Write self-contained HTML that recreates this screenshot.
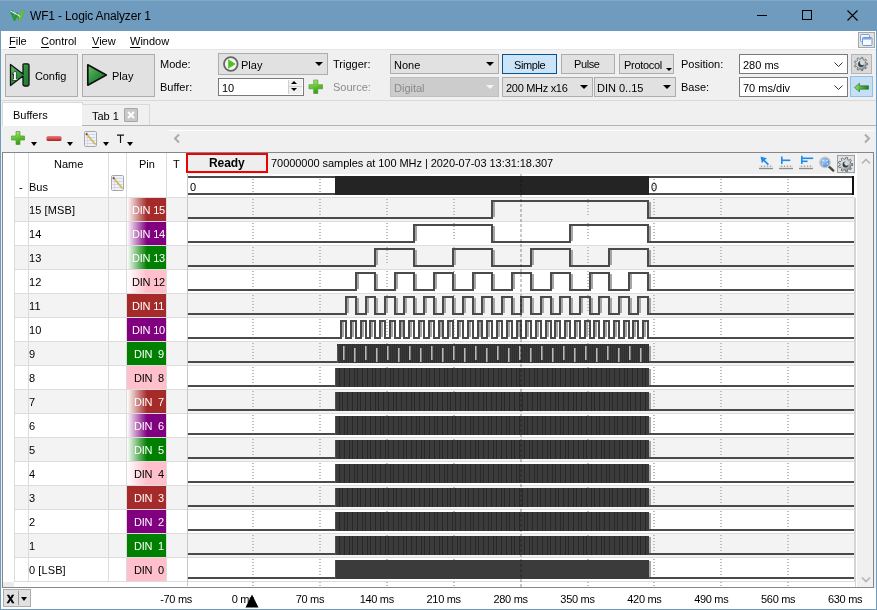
<!DOCTYPE html><html><head><meta charset="utf-8"><style>
*{box-sizing:border-box}
body{margin:0;width:877px;height:610px;overflow:hidden;background:#F0F0F0;position:relative;font-family:"Liberation Sans",sans-serif;font-size:11px;color:#000}
.t{position:absolute;white-space:nowrap;line-height:13px}
.btn{position:absolute;background:#E1E1E1;border:1px solid #ADADAD}
.cmb{position:absolute;background:#E1E1E1;border:1px solid #ADADAD}
.tri{position:absolute;width:0;height:0;border-left:4px solid transparent;border-right:4px solid transparent;border-top:4px solid #000}
</style></head><body>
<div style="position:absolute;left:0px;top:0px;width:877px;height:31px;background:#6F9BBE"></div>
<div style="position:absolute;left:0px;top:0px;width:877px;height:1px;background:#82A9C6"></div>
<svg style="position:absolute;left:9px;top:10px" width="17" height="12" viewBox="0 0 17 12">
<path d="M0.3 0.3 L3.6 0.3 L5.6 6 L7.4 2.4 L8.8 2.4 L10.6 6 L12.6 0.3 L15.8 0.3 L11.4 11 L9.9 11 L8.1 6.8 L6.3 11 L4.8 11 Z" fill="#28963C"/>
<path d="M8.8 2.4 L10.6 6 L12.6 0.3 L15.8 0.3 L11.4 11 L9.9 11 Z" fill="#6CBF3A"/>
<path d="M1.2 0.9 L9 5 L11.2 6.6" stroke="#F2FFE6" stroke-width="1" fill="none"/>
</svg>
<div class="t" style="left:30px;top:9px;font-size:12px;color:#000;line-height:14px;letter-spacing:-0.15px">WF1 - Logic Analyzer 1</div>
<div style="position:absolute;left:757px;top:15px;width:10px;height:1px;background:#000"></div>
<div style="position:absolute;left:802px;top:10px;width:10px;height:10px;border:1px solid #000"></div>
<svg style="position:absolute;left:847px;top:10px" width="11" height="11" viewBox="0 0 11 11"><path d="M0.5 0.5L10.5 10.5M10.5 0.5L0.5 10.5" stroke="#000" stroke-width="1.1"/></svg>
<div style="position:absolute;left:0px;top:31px;width:1px;height:579px;background:#6F9BBE"></div>
<div style="position:absolute;left:876px;top:31px;width:1px;height:579px;background:#6F9BBE"></div>
<div style="position:absolute;left:1px;top:588px;width:875px;height:21px;background:#FFFFFF"></div>
<div style="position:absolute;left:0px;top:609px;width:877px;height:1px;background:#6F9BBE"></div>
<div style="position:absolute;left:1px;top:31px;width:875px;height:18px;background:#fff"></div>
<div style="position:absolute;left:1px;top:49px;width:875px;height:1px;background:#E6E6E6"></div>
<div class="t" style="left:9px;top:35px;"><u style="text-decoration-thickness:1px;text-underline-offset:2px">F</u>ile</div>
<div class="t" style="left:41px;top:35px;"><u style="text-decoration-thickness:1px;text-underline-offset:2px">C</u>ontrol</div>
<div class="t" style="left:92px;top:35px;"><u style="text-decoration-thickness:1px;text-underline-offset:2px">V</u>iew</div>
<div class="t" style="left:130px;top:35px;"><u style="text-decoration-thickness:1px;text-underline-offset:2px">W</u>indow</div>
<div style="position:absolute;left:858px;top:32px;width:17px;height:16px;background:#E3E3E3;border:1px solid #A8A8A8"></div>
<svg style="position:absolute;left:860px;top:33px" width="14" height="14" viewBox="0 0 14 14">
<rect x="0.5" y="1.5" width="9" height="7" fill="#EEF3FA" stroke="#7FA6DC" rx="0.8"/>
<rect x="2.5" y="4.5" width="9.5" height="8" fill="#F6F9FD" stroke="#6F98D4" rx="0.8"/>
<rect x="3" y="5" width="8.5" height="1.6" fill="#86ABDF"/>
</svg>
<div style="position:absolute;left:1px;top:100px;width:875px;height:1px;background:#D9D9D9"></div>
<div class="btn" style="left:5px;top:54px;width:73px;height:43px"></div>
<svg style="position:absolute;left:9px;top:63px;overflow:visible" width="22" height="24" viewBox="0 0 22 24">
<defs><linearGradient id="gg" x1="0" y1="0" x2="1" y2="1"><stop offset="0" stop-color="#6DBF6D"/><stop offset="0.5" stop-color="#2E9140"/><stop offset="1" stop-color="#1F7A30"/></linearGradient></defs>
<path d="M1.5 1.5 L14 11 L14 2 Q14 0.8 15.5 0.8 L18.5 0.8 Q20 0.8 20 2 L20 21.5 Q20 23 18.5 23 L15.5 23 Q14 23 14 21.5 L14 13 L1.5 22.5 Z" fill="url(#gg)" stroke="#111" stroke-width="1.3" stroke-linejoin="round"/>
<text x="2.6" y="16.5" font-family="Liberation Serif" font-weight="bold" font-size="13" fill="#fff" stroke="#222" stroke-width="1.2" paint-order="stroke">1</text>
</svg>
<div class="t" style="left:35px;top:70px;letter-spacing:-0.1px">Config</div>
<div class="btn" style="left:82px;top:54px;width:73px;height:43px"></div>
<svg style="position:absolute;left:86px;top:63px" width="23" height="24" viewBox="0 0 23 24">
<path d="M1.8 1.8 L20.3 12 L1.8 22.2 Z" fill="url(#gg)" stroke="#111" stroke-width="1.7" stroke-linejoin="round"/>
</svg>
<div class="t" style="left:112px;top:70px;">Play</div>
<div class="t" style="left:160px;top:58px;">Mode:</div>
<div class="t" style="left:160px;top:81px;">Buffer:</div>
<div class="cmb" style="left:218px;top:53px;width:110px;height:22px"></div>
<svg style="position:absolute;left:222px;top:55px" width="18" height="18" viewBox="0 0 18 18">
<circle cx="8.8" cy="9" r="6.8" fill="#F4F4F4" stroke="#666" stroke-width="1.8"/>
<path d="M6.2 4.2 L13.6 9 L6.2 13.8Z" fill="#4CC21A"/></svg>
<div class="t" style="left:241px;top:59px;">Play</div>
<div class="tri" style="left:315px;top:62px"></div>
<div style="position:absolute;left:218px;top:78px;width:86px;height:18px;background:#fff;border:1px solid #7A7A7A"></div>
<div class="t" style="left:222px;top:82px;">10</div>
<div style="position:absolute;left:288px;top:80px;width:14px;height:14px;background:#F0F0F0;border-left:1px solid #CFCFCF"></div>
<div style="position:absolute;left:289px;top:86px;width:13px;height:1px;background:#CFCFCF"></div>
<div class="tri" style="left:291px;top:88px;border-width:3px 3.5px 0 3.5px"></div>
<div class="tri" style="left:291px;top:81px;border-width:0 3.5px 3px 3.5px;border-top:0;border-bottom:3px solid #000"></div>
<svg style="position:absolute;left:308px;top:79px" width="16" height="16" viewBox="0 0 16 16">
<defs><linearGradient id="gp" x1="0" y1="0" x2="0.3" y2="1"><stop offset="0" stop-color="#B4EC8A"/><stop offset="0.5" stop-color="#6CC83C"/><stop offset="1" stop-color="#3C9A1C"/></linearGradient></defs>
<path d="M5.7 1 H9.8 V5.7 H14.5 V9.8 H9.8 V14.5 H5.7 V9.8 H1 V5.7 H5.7Z" fill="url(#gp)" stroke="#4E9E2A" stroke-width="0.7" stroke-linejoin="round"/></svg>
<div class="t" style="left:333px;top:58px;">Trigger:</div>
<div class="t" style="left:333px;top:81px;color:#8A8A8A">Source:</div>
<div class="cmb" style="left:390px;top:54px;width:109px;height:20px"></div>
<div class="t" style="left:394px;top:59px;">None</div>
<div class="tri" style="left:486px;top:62px"></div>
<div class="cmb" style="left:390px;top:77px;width:109px;height:20px;background:#CCCCCC;border-color:#BFBFBF"></div>
<div class="t" style="left:394px;top:82px;color:#8A8A8A">Digital</div>
<div class="tri" style="left:486px;top:85px;border-top-color:#F4F4F4"></div>
<div class="btn" style="left:502px;top:54px;width:55px;height:20px;background:#CCE4F7;border-color:#005499"></div>
<div class="t" style="left:514px;top:59px;letter-spacing:-0.4px">Simple</div>
<div class="btn" style="left:561px;top:54px;width:54px;height:20px"></div>
<div class="t" style="left:574px;top:58px;letter-spacing:-0.4px">Pulse</div>
<div class="btn" style="left:619px;top:54px;width:55px;height:20px"></div>
<div class="t" style="left:624px;top:59px;letter-spacing:-0.3px">Protocol</div>
<div class="tri" style="left:666px;top:68px;border-width:3px 3px 0 3px"></div>
<div class="cmb" style="left:502px;top:77px;width:91px;height:20px"></div>
<div class="t" style="left:506px;top:82px;letter-spacing:-0.3px">200 MHz x16</div>
<div class="tri" style="left:580px;top:85px"></div>
<div class="cmb" style="left:594px;top:77px;width:82px;height:20px"></div>
<div class="t" style="left:597px;top:82px;">DIN 0..15</div>
<div class="tri" style="left:663px;top:85px"></div>
<div class="t" style="left:681px;top:58px;">Position:</div>
<div class="t" style="left:681px;top:81px;">Base:</div>
<div style="position:absolute;left:739px;top:54px;width:109px;height:20px;background:#fff;border:1px solid #7A7A7A"></div>
<div class="t" style="left:743px;top:59px;">280 ms</div>
<svg style="position:absolute;left:834px;top:62px" width="9" height="6" viewBox="0 0 9 6"><path d="M0.5 0.5 L4.5 4.5 L8.5 0.5" stroke="#333" fill="none"/></svg>
<div style="position:absolute;left:739px;top:77px;width:109px;height:20px;background:#fff;border:1px solid #7A7A7A"></div>
<div class="t" style="left:743px;top:82px;">70 ms/div</div>
<svg style="position:absolute;left:834px;top:85px" width="9" height="6" viewBox="0 0 9 6"><path d="M0.5 0.5 L4.5 4.5 L8.5 0.5" stroke="#333" fill="none"/></svg>
<div class="btn" style="left:851px;top:54px;width:21px;height:20px;background:#DADADA;border-color:#B4B4B4"></div>
<svg style="position:absolute;left:853px;top:56px" width="16" height="16" viewBox="0 0 16 16">
<defs><linearGradient id="gear853" x1="0" y1="0" x2="1" y2="1"><stop offset="0" stop-color="#FAFAFA"/><stop offset="0.5" stop-color="#C4CACD"/><stop offset="1" stop-color="#6E787C"/></linearGradient></defs>
<path d="M12.91,7.05 L14.65,7.18 L14.65,8.82 L12.91,8.95 L12.37,10.42 L13.62,11.65 L12.57,12.90 L11.15,11.89 L9.79,12.67 L9.96,14.41 L8.35,14.69 L7.91,13.00 L6.37,12.73 L5.38,14.17 L3.97,13.35 L4.72,11.77 L3.71,10.58 L2.03,11.04 L1.47,9.51 L3.06,8.78 L3.06,7.22 L1.47,6.49 L2.03,4.96 L3.71,5.42 L4.72,4.23 L3.97,2.65 L5.38,1.83 L6.37,3.27 L7.91,3.00 L8.35,1.31 L9.96,1.59 L9.79,3.33 L11.15,4.11 L12.57,3.10 L13.62,4.35 L12.37,5.58Z" fill="url(#gear853)" stroke="#5A666C" stroke-width="0.8"/>
<circle cx="8.0" cy="8.0" r="2.9" fill="#2F3C43"/>
<circle cx="9.20" cy="6.80" r="2.4" fill="#D6DADC"/>
</svg>
<div class="btn" style="left:850px;top:76px;width:23px;height:21px;background:#C6DFF5;border-color:#8EC0EC"></div>
<svg style="position:absolute;left:853px;top:82px" width="17" height="11" viewBox="0 0 17 11">
<defs><linearGradient id="ga" x1="0" y1="0" x2="1" y2="0"><stop offset="0" stop-color="#9ADB7E"/><stop offset="0.5" stop-color="#4FB040"/><stop offset="1" stop-color="#1F7A1F"/></linearGradient></defs>
<path d="M1.5 5.5 L6.5 1.2 V3.8 H15.5 V7.2 H6.5 V9.8Z" fill="url(#ga)" stroke="#2E7D2E" stroke-width="0.7" stroke-linejoin="round"/></svg>
<div style="position:absolute;left:2px;top:125px;width:874px;height:1px;background:#D9D9D9"></div>
<div style="position:absolute;left:2px;top:102px;width:81px;height:24px;background:#fff;border:1px solid #D9D9D9;border-bottom:none"></div>
<div class="t" style="left:13px;top:109px;">Buffers</div>
<div style="position:absolute;left:82px;top:104px;width:68px;height:21px;background:#F0F0F0;border:1px solid #D9D9D9;border-bottom:none;border-left:none"></div>
<div style="position:absolute;left:82px;top:125px;width:794px;height:1px;background:#B4B4B4"></div>
<div class="t" style="left:92px;top:110px;">Tab 1</div>
<div style="position:absolute;left:124px;top:108px;width:14px;height:14px;background:#C8C8C8;border:1px solid #A8A8A8;border-radius:1px"></div>
<svg style="position:absolute;left:126px;top:110px" width="10" height="10" viewBox="0 0 10 10"><path d="M2 2L8 8M8 2L2 8" stroke="#fff" stroke-width="2"/></svg>
<svg style="position:absolute;left:10px;top:130px" width="17" height="17" viewBox="0 0 17 17">
<defs><linearGradient id="gp2" x1="0" y1="0" x2="0.3" y2="1"><stop offset="0" stop-color="#B4EC8A"/><stop offset="0.5" stop-color="#6CC83C"/><stop offset="1" stop-color="#3C9A1C"/></linearGradient></defs>
<path d="M6 1.5 H10 V6 H14.5 V10 H10 V14.5 H6 V10 H1.5 V6 H6Z" fill="url(#gp2)" stroke="#4E9E2A" stroke-width="0.7" stroke-linejoin="round"/></svg>
<div class="tri" style="left:31px;top:142px;border-width:4px 3px 0 3px"></div>
<svg style="position:absolute;left:46px;top:135px" width="16" height="7" viewBox="0 0 16 7">
<defs><linearGradient id="rm" x1="0" y1="0" x2="0" y2="1"><stop offset="0" stop-color="#F08080"/><stop offset="1" stop-color="#B02020"/></linearGradient></defs>
<rect x="0.5" y="1" width="15" height="5" rx="1.5" fill="url(#rm)"/></svg>
<div class="tri" style="left:67px;top:142px;border-width:4px 3px 0 3px"></div>
<svg style="position:absolute;left:84px;top:131px" width="13" height="16" viewBox="0 0 13 16">
<rect x="0.5" y="0.5" width="12" height="15" rx="1.2" fill="#EEF2FA" stroke="#A8A8A8"/>
<path d="M1.5 3.5H11.5M1.5 6.5H11.5M1.5 9.5H11.5M1.5 12.5H11.5" stroke="#C8D8F0" stroke-width="1"/>
<path d="M3.5 1V15" stroke="#F0C8E0" stroke-width="0.8"/>
<path d="M2.5 3 L11.5 13.5" stroke="#D8B84A" stroke-width="1.8"/>
<path d="M2 2.4 L3.2 3.8" stroke="#555" stroke-width="1.8"/></svg>
<div class="tri" style="left:103px;top:142px;border-width:4px 3px 0 3px"></div>
<svg style="position:absolute;left:116px;top:134px" width="9" height="10" viewBox="0 0 9 10"><path d="M1 1.1 H8 M4.5 1.1 V9" stroke="#111" stroke-width="1.15"/></svg>
<div class="tri" style="left:127px;top:142px;border-width:4px 3px 0 3px"></div>
<div style="position:absolute;left:169px;top:130px;width:705px;height:1px;background:#fff"></div>
<svg style="position:absolute;left:172px;top:133px" width="10" height="11" viewBox="0 0 10 11"><path d="M7 1.5 L3 5.5 L7 9.5" stroke="#ABABAB" stroke-width="2" fill="none"/></svg>
<svg style="position:absolute;left:862px;top:133px" width="10" height="11" viewBox="0 0 10 11"><path d="M3 1.5 L7 5.5 L3 9.5" stroke="#ABABAB" stroke-width="2" fill="none"/></svg>
<div style="position:absolute;left:2px;top:152px;width:872px;height:436px;background:#fff;border:1px solid #828790"></div>
<div class="t" style="left:54px;top:158px;">Name</div>
<div class="t" style="left:139px;top:158px;">Pin</div>
<div class="t" style="left:173px;top:158px;">T</div>
<div style="position:absolute;left:187px;top:153px;width:668px;height:21px;background:#F0F0F0"></div>
<div style="position:absolute;left:186px;top:153px;width:82px;height:20px;background:#EEEEEE;border:2px solid #F00000"></div>
<div class="t" style="left:209px;top:157px;font-weight:bold;font-size:12px;letter-spacing:-0.1px">Ready</div>
<div class="t" style="left:271px;top:157px;letter-spacing:-0.05px">70000000 samples at 100 MHz | 2020-07-03 13:31:18.307</div>
<svg style="position:absolute;left:0;top:0" width="877" height="610">
<g fill="#1E8BF0"><path d="M760.5,156.5 L767,158.2 L764.8,160 L769,164 L767.8,165.2 L763.6,161.2 L761.8,163.2Z"/></g>
<g stroke="#1E8BF0" stroke-width="1.6" fill="none">
<path d="M781.8 156.6 V164"/><path d="M781 160.3 H790.3"/>
<path d="M801.8 155.8 V164"/><path d="M801 158.3 H813.2"/><path d="M801 161.3 H807.6"/>
</g>
<rect x="759" y="165.5" width="14" height="3" rx="1" fill="#E0E0E0"/><rect x="759" y="168.0" width="14" height="1.2" fill="#8E8E8E"/><rect x="761" y="165.5" width="1" height="1.5" fill="#A8A8A8"/><rect x="764" y="165.5" width="1" height="1.5" fill="#A8A8A8"/><rect x="767" y="165.5" width="1" height="1.5" fill="#A8A8A8"/><rect x="770" y="165.5" width="1" height="1.5" fill="#A8A8A8"/><rect x="779" y="165.5" width="14" height="3" rx="1" fill="#E0E0E0"/><rect x="779" y="168.0" width="14" height="1.2" fill="#8E8E8E"/><rect x="781" y="165.5" width="1" height="1.5" fill="#A8A8A8"/><rect x="784" y="165.5" width="1" height="1.5" fill="#A8A8A8"/><rect x="787" y="165.5" width="1" height="1.5" fill="#A8A8A8"/><rect x="790" y="165.5" width="1" height="1.5" fill="#A8A8A8"/><rect x="799" y="165.5" width="14" height="3" rx="1" fill="#E0E0E0"/><rect x="799" y="168.0" width="14" height="1.2" fill="#8E8E8E"/><rect x="801" y="165.5" width="1" height="1.5" fill="#A8A8A8"/><rect x="804" y="165.5" width="1" height="1.5" fill="#A8A8A8"/><rect x="807" y="165.5" width="1" height="1.5" fill="#A8A8A8"/><rect x="810" y="165.5" width="1" height="1.5" fill="#A8A8A8"/>
<defs><radialGradient id="mg" cx="0.4" cy="0.35" r="0.7"><stop offset="0" stop-color="#A8D0FA"/><stop offset="1" stop-color="#3F86E0"/></radialGradient></defs>
<path d="M829 166.6 L833.3 170.6" stroke="#4A4A4A" stroke-width="2.4" stroke-linecap="round"/>
<circle cx="825" cy="162.4" r="5.2" fill="url(#mg)" stroke="#CFC8B4" stroke-width="1.3"/>
<g fill="#EAF4FF"><circle cx="823" cy="160.5" r="0.7"/><circle cx="827" cy="160.5" r="0.7"/><circle cx="822.5" cy="164" r="0.7"/><circle cx="827.5" cy="164" r="0.7"/></g>
<rect x="837.5" y="155.5" width="17" height="17" fill="#E2E2E2" stroke="#A0A0A0"/>
</svg>
<svg style="position:absolute;left:837px;top:156px" width="17" height="17" viewBox="0 0 17 17">
<defs><linearGradient id="gear837" x1="0" y1="0" x2="1" y2="1"><stop offset="0" stop-color="#FAFAFA"/><stop offset="0.5" stop-color="#C4CACD"/><stop offset="1" stop-color="#6E787C"/></linearGradient></defs>
<path d="M13.90,7.45 L15.65,7.62 L15.65,9.38 L13.90,9.55 L13.31,11.17 L14.54,12.42 L13.41,13.77 L11.96,12.77 L10.47,13.63 L10.61,15.39 L8.88,15.69 L8.40,14.00 L6.71,13.70 L5.69,15.13 L4.17,14.25 L4.89,12.65 L3.79,11.33 L2.08,11.77 L1.48,10.12 L3.07,9.36 L3.07,7.64 L1.48,6.88 L2.08,5.23 L3.79,5.67 L4.89,4.35 L4.17,2.75 L5.69,1.87 L6.71,3.30 L8.40,3.00 L8.88,1.31 L10.61,1.61 L10.47,3.37 L11.96,4.23 L13.41,3.23 L14.54,4.58 L13.31,5.83Z" fill="url(#gear837)" stroke="#5A666C" stroke-width="0.8"/>
<circle cx="8.5" cy="8.5" r="2.9" fill="#2F3C43"/>
<circle cx="9.70" cy="7.30" r="2.4" fill="#D6DADC"/>
</svg>
<div style="position:absolute;left:855px;top:153px;width:2px;height:434px;background:#FFFFFF"></div>
<div style="position:absolute;left:857px;top:153px;width:16px;height:434px;background:#F0F0F0"></div>
<svg style="position:absolute;left:861px;top:158px" width="10" height="7" viewBox="0 0 10 7"><path d="M1 5.5 L5 1.5 L9 5.5" stroke="#B4B4B4" stroke-width="1.6" fill="none"/></svg>
<svg style="position:absolute;left:861px;top:576px" width="10" height="7" viewBox="0 0 10 7"><path d="M1 1.5 L5 5.5 L9 1.5" stroke="#B4B4B4" stroke-width="1.6" fill="none"/></svg>
<div style="position:absolute;left:14px;top:153px;width:1px;height:429px;background:#DCDCDC"></div>
<div style="position:absolute;left:28px;top:153px;width:1px;height:429px;background:#DCDCDC"></div>
<div style="position:absolute;left:108px;top:153px;width:1px;height:429px;background:#DCDCDC"></div>
<div style="position:absolute;left:126px;top:153px;width:1px;height:429px;background:#DCDCDC"></div>
<div style="position:absolute;left:166px;top:153px;width:1px;height:429px;background:#DCDCDC"></div>
<div style="position:absolute;left:187px;top:174px;width:1px;height:412px;background:#C8C8C8"></div>
<div style="position:absolute;left:15px;top:197px;width:840px;height:1px;background:#DCDCDC"></div>
<div style="position:absolute;left:855px;top:582px;width:1px;height:5px;background:#D4D4D4"></div>
<div style="position:absolute;left:3px;top:582px;width:11px;height:5px;background:#EBEBEB"></div>
<div class="t" style="left:19px;top:181px;">-</div>
<div class="t" style="left:29px;top:181px;">Bus</div>
<svg style="position:absolute;left:111px;top:175px" width="13" height="16" viewBox="0 0 13 16">
<rect x="0.5" y="0.5" width="12" height="15" rx="1.2" fill="#EEF2FA" stroke="#A8A8A8"/>
<path d="M1.5 3.5H11.5M1.5 6.5H11.5M1.5 9.5H11.5M1.5 12.5H11.5" stroke="#C8D8F0" stroke-width="1"/>
<path d="M3.5 1V15" stroke="#F0C8E0" stroke-width="0.8"/>
<path d="M2.5 3 L11.5 13.5" stroke="#D8B84A" stroke-width="1.8"/>
<path d="M2 2.4 L3.2 3.8" stroke="#555" stroke-width="1.8"/></svg>
<div style="position:absolute;left:15px;top:198px;width:840px;height:23px;background:#F3F3F3"></div>
<div style="position:absolute;left:15px;top:221px;width:840px;height:1px;background:#DCDCDC"></div>
<div style="position:absolute;left:28px;top:198px;width:1px;height:24px;background:#DCDCDC"></div>
<div style="position:absolute;left:108px;top:198px;width:1px;height:24px;background:#DCDCDC"></div>
<div style="position:absolute;left:126px;top:198px;width:1px;height:24px;background:#DCDCDC"></div>
<div style="position:absolute;left:166px;top:198px;width:1px;height:24px;background:#DCDCDC"></div>
<div style="position:absolute;left:187px;top:198px;width:1px;height:24px;background:#C8C8C8"></div>
<div class="t" style="left:29px;top:204px;letter-spacing:0.1px">15 [MSB]</div>
<div style="position:absolute;left:127px;top:198px;width:39px;height:23px;background:linear-gradient(to right,#fff 0px,#A52A2A 20px,#A52A2A 100%);overflow:hidden"><div class="t" style="left:5px;top:6px;color:#fff;letter-spacing:-0.2px">DIN 15</div></div>
<div style="position:absolute;left:15px;top:222px;width:840px;height:23px;background:#FFFFFF"></div>
<div style="position:absolute;left:15px;top:245px;width:840px;height:1px;background:#DCDCDC"></div>
<div style="position:absolute;left:28px;top:222px;width:1px;height:24px;background:#DCDCDC"></div>
<div style="position:absolute;left:108px;top:222px;width:1px;height:24px;background:#DCDCDC"></div>
<div style="position:absolute;left:126px;top:222px;width:1px;height:24px;background:#DCDCDC"></div>
<div style="position:absolute;left:166px;top:222px;width:1px;height:24px;background:#DCDCDC"></div>
<div style="position:absolute;left:187px;top:222px;width:1px;height:24px;background:#C8C8C8"></div>
<div class="t" style="left:29px;top:228px;letter-spacing:0.1px">14</div>
<div style="position:absolute;left:127px;top:222px;width:39px;height:23px;background:linear-gradient(to right,#fff 0px,#800080 20px,#800080 100%);overflow:hidden"><div class="t" style="left:5px;top:6px;color:#fff;letter-spacing:-0.2px">DIN 14</div></div>
<div style="position:absolute;left:15px;top:246px;width:840px;height:23px;background:#F3F3F3"></div>
<div style="position:absolute;left:15px;top:269px;width:840px;height:1px;background:#DCDCDC"></div>
<div style="position:absolute;left:28px;top:246px;width:1px;height:24px;background:#DCDCDC"></div>
<div style="position:absolute;left:108px;top:246px;width:1px;height:24px;background:#DCDCDC"></div>
<div style="position:absolute;left:126px;top:246px;width:1px;height:24px;background:#DCDCDC"></div>
<div style="position:absolute;left:166px;top:246px;width:1px;height:24px;background:#DCDCDC"></div>
<div style="position:absolute;left:187px;top:246px;width:1px;height:24px;background:#C8C8C8"></div>
<div class="t" style="left:29px;top:252px;letter-spacing:0.1px">13</div>
<div style="position:absolute;left:127px;top:246px;width:39px;height:23px;background:linear-gradient(to right,#fff 0px,#008000 20px,#008000 100%);overflow:hidden"><div class="t" style="left:5px;top:6px;color:#fff;letter-spacing:-0.2px">DIN 13</div></div>
<div style="position:absolute;left:15px;top:270px;width:840px;height:23px;background:#FFFFFF"></div>
<div style="position:absolute;left:15px;top:293px;width:840px;height:1px;background:#DCDCDC"></div>
<div style="position:absolute;left:28px;top:270px;width:1px;height:24px;background:#DCDCDC"></div>
<div style="position:absolute;left:108px;top:270px;width:1px;height:24px;background:#DCDCDC"></div>
<div style="position:absolute;left:126px;top:270px;width:1px;height:24px;background:#DCDCDC"></div>
<div style="position:absolute;left:166px;top:270px;width:1px;height:24px;background:#DCDCDC"></div>
<div style="position:absolute;left:187px;top:270px;width:1px;height:24px;background:#C8C8C8"></div>
<div class="t" style="left:29px;top:276px;letter-spacing:0.1px">12</div>
<div style="position:absolute;left:127px;top:270px;width:39px;height:23px;background:linear-gradient(to right,#fff 0px,#FFC0CB 20px,#FFC0CB 100%);overflow:hidden"><div class="t" style="left:5px;top:6px;color:#000;letter-spacing:-0.2px">DIN 12</div></div>
<div style="position:absolute;left:15px;top:294px;width:840px;height:23px;background:#F3F3F3"></div>
<div style="position:absolute;left:15px;top:317px;width:840px;height:1px;background:#DCDCDC"></div>
<div style="position:absolute;left:28px;top:294px;width:1px;height:24px;background:#DCDCDC"></div>
<div style="position:absolute;left:108px;top:294px;width:1px;height:24px;background:#DCDCDC"></div>
<div style="position:absolute;left:126px;top:294px;width:1px;height:24px;background:#DCDCDC"></div>
<div style="position:absolute;left:166px;top:294px;width:1px;height:24px;background:#DCDCDC"></div>
<div style="position:absolute;left:187px;top:294px;width:1px;height:24px;background:#C8C8C8"></div>
<div class="t" style="left:29px;top:300px;letter-spacing:0.1px">11</div>
<div style="position:absolute;left:127px;top:294px;width:39px;height:23px;background:#A52A2A;overflow:hidden"><div class="t" style="left:5px;top:6px;color:#fff;letter-spacing:-0.2px">DIN 11</div></div>
<div style="position:absolute;left:15px;top:318px;width:840px;height:23px;background:#FFFFFF"></div>
<div style="position:absolute;left:15px;top:341px;width:840px;height:1px;background:#DCDCDC"></div>
<div style="position:absolute;left:28px;top:318px;width:1px;height:24px;background:#DCDCDC"></div>
<div style="position:absolute;left:108px;top:318px;width:1px;height:24px;background:#DCDCDC"></div>
<div style="position:absolute;left:126px;top:318px;width:1px;height:24px;background:#DCDCDC"></div>
<div style="position:absolute;left:166px;top:318px;width:1px;height:24px;background:#DCDCDC"></div>
<div style="position:absolute;left:187px;top:318px;width:1px;height:24px;background:#C8C8C8"></div>
<div class="t" style="left:29px;top:324px;letter-spacing:0.1px">10</div>
<div style="position:absolute;left:127px;top:318px;width:39px;height:23px;background:#800080;overflow:hidden"><div class="t" style="left:5px;top:6px;color:#fff;letter-spacing:-0.2px">DIN 10</div></div>
<div style="position:absolute;left:15px;top:342px;width:840px;height:23px;background:#F3F3F3"></div>
<div style="position:absolute;left:15px;top:365px;width:840px;height:1px;background:#DCDCDC"></div>
<div style="position:absolute;left:28px;top:342px;width:1px;height:24px;background:#DCDCDC"></div>
<div style="position:absolute;left:108px;top:342px;width:1px;height:24px;background:#DCDCDC"></div>
<div style="position:absolute;left:126px;top:342px;width:1px;height:24px;background:#DCDCDC"></div>
<div style="position:absolute;left:166px;top:342px;width:1px;height:24px;background:#DCDCDC"></div>
<div style="position:absolute;left:187px;top:342px;width:1px;height:24px;background:#C8C8C8"></div>
<div class="t" style="left:29px;top:348px;letter-spacing:0.1px">9</div>
<div style="position:absolute;left:127px;top:342px;width:39px;height:23px;background:#008000;overflow:hidden"><div class="t" style="left:7px;top:6px;color:#fff;letter-spacing:-0.2px">DIN&nbsp;&nbsp;9</div></div>
<div style="position:absolute;left:15px;top:366px;width:840px;height:23px;background:#FFFFFF"></div>
<div style="position:absolute;left:15px;top:389px;width:840px;height:1px;background:#DCDCDC"></div>
<div style="position:absolute;left:28px;top:366px;width:1px;height:24px;background:#DCDCDC"></div>
<div style="position:absolute;left:108px;top:366px;width:1px;height:24px;background:#DCDCDC"></div>
<div style="position:absolute;left:126px;top:366px;width:1px;height:24px;background:#DCDCDC"></div>
<div style="position:absolute;left:166px;top:366px;width:1px;height:24px;background:#DCDCDC"></div>
<div style="position:absolute;left:187px;top:366px;width:1px;height:24px;background:#C8C8C8"></div>
<div class="t" style="left:29px;top:372px;letter-spacing:0.1px">8</div>
<div style="position:absolute;left:127px;top:366px;width:39px;height:23px;background:#FFC0CB;overflow:hidden"><div class="t" style="left:7px;top:6px;color:#000;letter-spacing:-0.2px">DIN&nbsp;&nbsp;8</div></div>
<div style="position:absolute;left:15px;top:390px;width:840px;height:23px;background:#F3F3F3"></div>
<div style="position:absolute;left:15px;top:413px;width:840px;height:1px;background:#DCDCDC"></div>
<div style="position:absolute;left:28px;top:390px;width:1px;height:24px;background:#DCDCDC"></div>
<div style="position:absolute;left:108px;top:390px;width:1px;height:24px;background:#DCDCDC"></div>
<div style="position:absolute;left:126px;top:390px;width:1px;height:24px;background:#DCDCDC"></div>
<div style="position:absolute;left:166px;top:390px;width:1px;height:24px;background:#DCDCDC"></div>
<div style="position:absolute;left:187px;top:390px;width:1px;height:24px;background:#C8C8C8"></div>
<div class="t" style="left:29px;top:396px;letter-spacing:0.1px">7</div>
<div style="position:absolute;left:127px;top:390px;width:39px;height:23px;background:linear-gradient(to right,#fff 0px,#A52A2A 20px,#A52A2A 100%);overflow:hidden"><div class="t" style="left:7px;top:6px;color:#fff;letter-spacing:-0.2px">DIN&nbsp;&nbsp;7</div></div>
<div style="position:absolute;left:15px;top:414px;width:840px;height:23px;background:#FFFFFF"></div>
<div style="position:absolute;left:15px;top:437px;width:840px;height:1px;background:#DCDCDC"></div>
<div style="position:absolute;left:28px;top:414px;width:1px;height:24px;background:#DCDCDC"></div>
<div style="position:absolute;left:108px;top:414px;width:1px;height:24px;background:#DCDCDC"></div>
<div style="position:absolute;left:126px;top:414px;width:1px;height:24px;background:#DCDCDC"></div>
<div style="position:absolute;left:166px;top:414px;width:1px;height:24px;background:#DCDCDC"></div>
<div style="position:absolute;left:187px;top:414px;width:1px;height:24px;background:#C8C8C8"></div>
<div class="t" style="left:29px;top:420px;letter-spacing:0.1px">6</div>
<div style="position:absolute;left:127px;top:414px;width:39px;height:23px;background:linear-gradient(to right,#fff 0px,#800080 20px,#800080 100%);overflow:hidden"><div class="t" style="left:7px;top:6px;color:#fff;letter-spacing:-0.2px">DIN&nbsp;&nbsp;6</div></div>
<div style="position:absolute;left:15px;top:438px;width:840px;height:23px;background:#F3F3F3"></div>
<div style="position:absolute;left:15px;top:461px;width:840px;height:1px;background:#DCDCDC"></div>
<div style="position:absolute;left:28px;top:438px;width:1px;height:24px;background:#DCDCDC"></div>
<div style="position:absolute;left:108px;top:438px;width:1px;height:24px;background:#DCDCDC"></div>
<div style="position:absolute;left:126px;top:438px;width:1px;height:24px;background:#DCDCDC"></div>
<div style="position:absolute;left:166px;top:438px;width:1px;height:24px;background:#DCDCDC"></div>
<div style="position:absolute;left:187px;top:438px;width:1px;height:24px;background:#C8C8C8"></div>
<div class="t" style="left:29px;top:444px;letter-spacing:0.1px">5</div>
<div style="position:absolute;left:127px;top:438px;width:39px;height:23px;background:linear-gradient(to right,#fff 0px,#008000 20px,#008000 100%);overflow:hidden"><div class="t" style="left:7px;top:6px;color:#fff;letter-spacing:-0.2px">DIN&nbsp;&nbsp;5</div></div>
<div style="position:absolute;left:15px;top:462px;width:840px;height:23px;background:#FFFFFF"></div>
<div style="position:absolute;left:15px;top:485px;width:840px;height:1px;background:#DCDCDC"></div>
<div style="position:absolute;left:28px;top:462px;width:1px;height:24px;background:#DCDCDC"></div>
<div style="position:absolute;left:108px;top:462px;width:1px;height:24px;background:#DCDCDC"></div>
<div style="position:absolute;left:126px;top:462px;width:1px;height:24px;background:#DCDCDC"></div>
<div style="position:absolute;left:166px;top:462px;width:1px;height:24px;background:#DCDCDC"></div>
<div style="position:absolute;left:187px;top:462px;width:1px;height:24px;background:#C8C8C8"></div>
<div class="t" style="left:29px;top:468px;letter-spacing:0.1px">4</div>
<div style="position:absolute;left:127px;top:462px;width:39px;height:23px;background:linear-gradient(to right,#fff 0px,#FFC0CB 20px,#FFC0CB 100%);overflow:hidden"><div class="t" style="left:7px;top:6px;color:#000;letter-spacing:-0.2px">DIN&nbsp;&nbsp;4</div></div>
<div style="position:absolute;left:15px;top:486px;width:840px;height:23px;background:#F3F3F3"></div>
<div style="position:absolute;left:15px;top:509px;width:840px;height:1px;background:#DCDCDC"></div>
<div style="position:absolute;left:28px;top:486px;width:1px;height:24px;background:#DCDCDC"></div>
<div style="position:absolute;left:108px;top:486px;width:1px;height:24px;background:#DCDCDC"></div>
<div style="position:absolute;left:126px;top:486px;width:1px;height:24px;background:#DCDCDC"></div>
<div style="position:absolute;left:166px;top:486px;width:1px;height:24px;background:#DCDCDC"></div>
<div style="position:absolute;left:187px;top:486px;width:1px;height:24px;background:#C8C8C8"></div>
<div class="t" style="left:29px;top:492px;letter-spacing:0.1px">3</div>
<div style="position:absolute;left:127px;top:486px;width:39px;height:23px;background:#A52A2A;overflow:hidden"><div class="t" style="left:7px;top:6px;color:#fff;letter-spacing:-0.2px">DIN&nbsp;&nbsp;3</div></div>
<div style="position:absolute;left:15px;top:510px;width:840px;height:23px;background:#FFFFFF"></div>
<div style="position:absolute;left:15px;top:533px;width:840px;height:1px;background:#DCDCDC"></div>
<div style="position:absolute;left:28px;top:510px;width:1px;height:24px;background:#DCDCDC"></div>
<div style="position:absolute;left:108px;top:510px;width:1px;height:24px;background:#DCDCDC"></div>
<div style="position:absolute;left:126px;top:510px;width:1px;height:24px;background:#DCDCDC"></div>
<div style="position:absolute;left:166px;top:510px;width:1px;height:24px;background:#DCDCDC"></div>
<div style="position:absolute;left:187px;top:510px;width:1px;height:24px;background:#C8C8C8"></div>
<div class="t" style="left:29px;top:516px;letter-spacing:0.1px">2</div>
<div style="position:absolute;left:127px;top:510px;width:39px;height:23px;background:#800080;overflow:hidden"><div class="t" style="left:7px;top:6px;color:#fff;letter-spacing:-0.2px">DIN&nbsp;&nbsp;2</div></div>
<div style="position:absolute;left:15px;top:534px;width:840px;height:23px;background:#F3F3F3"></div>
<div style="position:absolute;left:15px;top:557px;width:840px;height:1px;background:#DCDCDC"></div>
<div style="position:absolute;left:28px;top:534px;width:1px;height:24px;background:#DCDCDC"></div>
<div style="position:absolute;left:108px;top:534px;width:1px;height:24px;background:#DCDCDC"></div>
<div style="position:absolute;left:126px;top:534px;width:1px;height:24px;background:#DCDCDC"></div>
<div style="position:absolute;left:166px;top:534px;width:1px;height:24px;background:#DCDCDC"></div>
<div style="position:absolute;left:187px;top:534px;width:1px;height:24px;background:#C8C8C8"></div>
<div class="t" style="left:29px;top:540px;letter-spacing:0.1px">1</div>
<div style="position:absolute;left:127px;top:534px;width:39px;height:23px;background:#008000;overflow:hidden"><div class="t" style="left:7px;top:6px;color:#fff;letter-spacing:-0.2px">DIN&nbsp;&nbsp;1</div></div>
<div style="position:absolute;left:15px;top:558px;width:840px;height:23px;background:#FFFFFF"></div>
<div style="position:absolute;left:15px;top:581px;width:840px;height:1px;background:#DCDCDC"></div>
<div style="position:absolute;left:28px;top:558px;width:1px;height:24px;background:#DCDCDC"></div>
<div style="position:absolute;left:108px;top:558px;width:1px;height:24px;background:#DCDCDC"></div>
<div style="position:absolute;left:126px;top:558px;width:1px;height:24px;background:#DCDCDC"></div>
<div style="position:absolute;left:166px;top:558px;width:1px;height:24px;background:#DCDCDC"></div>
<div style="position:absolute;left:187px;top:558px;width:1px;height:24px;background:#C8C8C8"></div>
<div class="t" style="left:29px;top:564px;letter-spacing:0.1px">0 [LSB]</div>
<div style="position:absolute;left:127px;top:558px;width:39px;height:23px;background:#FFC0CB;overflow:hidden"><div class="t" style="left:7px;top:6px;color:#000;letter-spacing:-0.2px">DIN&nbsp;&nbsp;0</div></div>
<svg style="position:absolute;left:0;top:0" width="877" height="610" shape-rendering="crispEdges"><line x1="253" y1="176" x2="253" y2="196" stroke="#BDBDBD" stroke-width="2" stroke-dasharray="1,2"/><line x1="253" y1="199" x2="253" y2="217" stroke="#BDBDBD" stroke-width="2" stroke-dasharray="1,2"/><line x1="253" y1="223" x2="253" y2="241" stroke="#BDBDBD" stroke-width="2" stroke-dasharray="1,2"/><line x1="253" y1="247" x2="253" y2="265" stroke="#BDBDBD" stroke-width="2" stroke-dasharray="1,2"/><line x1="253" y1="271" x2="253" y2="289" stroke="#BDBDBD" stroke-width="2" stroke-dasharray="1,2"/><line x1="253" y1="295" x2="253" y2="313" stroke="#BDBDBD" stroke-width="2" stroke-dasharray="1,2"/><line x1="253" y1="319" x2="253" y2="337" stroke="#BDBDBD" stroke-width="2" stroke-dasharray="1,2"/><line x1="253" y1="343" x2="253" y2="361" stroke="#BDBDBD" stroke-width="2" stroke-dasharray="1,2"/><line x1="253" y1="367" x2="253" y2="385" stroke="#BDBDBD" stroke-width="2" stroke-dasharray="1,2"/><line x1="253" y1="391" x2="253" y2="409" stroke="#BDBDBD" stroke-width="2" stroke-dasharray="1,2"/><line x1="253" y1="415" x2="253" y2="433" stroke="#BDBDBD" stroke-width="2" stroke-dasharray="1,2"/><line x1="253" y1="439" x2="253" y2="457" stroke="#BDBDBD" stroke-width="2" stroke-dasharray="1,2"/><line x1="253" y1="463" x2="253" y2="481" stroke="#BDBDBD" stroke-width="2" stroke-dasharray="1,2"/><line x1="253" y1="487" x2="253" y2="505" stroke="#BDBDBD" stroke-width="2" stroke-dasharray="1,2"/><line x1="253" y1="511" x2="253" y2="529" stroke="#BDBDBD" stroke-width="2" stroke-dasharray="1,2"/><line x1="253" y1="535" x2="253" y2="553" stroke="#BDBDBD" stroke-width="2" stroke-dasharray="1,2"/><line x1="253" y1="559" x2="253" y2="577" stroke="#BDBDBD" stroke-width="2" stroke-dasharray="1,2"/><line x1="253" y1="582" x2="253" y2="587" stroke="#BDBDBD" stroke-width="2" stroke-dasharray="1,2"/><line x1="320" y1="176" x2="320" y2="196" stroke="#BDBDBD" stroke-width="2" stroke-dasharray="1,2"/><line x1="320" y1="199" x2="320" y2="217" stroke="#BDBDBD" stroke-width="2" stroke-dasharray="1,2"/><line x1="320" y1="223" x2="320" y2="241" stroke="#BDBDBD" stroke-width="2" stroke-dasharray="1,2"/><line x1="320" y1="247" x2="320" y2="265" stroke="#BDBDBD" stroke-width="2" stroke-dasharray="1,2"/><line x1="320" y1="271" x2="320" y2="289" stroke="#BDBDBD" stroke-width="2" stroke-dasharray="1,2"/><line x1="320" y1="295" x2="320" y2="313" stroke="#BDBDBD" stroke-width="2" stroke-dasharray="1,2"/><line x1="320" y1="319" x2="320" y2="337" stroke="#BDBDBD" stroke-width="2" stroke-dasharray="1,2"/><line x1="320" y1="343" x2="320" y2="361" stroke="#BDBDBD" stroke-width="2" stroke-dasharray="1,2"/><line x1="320" y1="367" x2="320" y2="385" stroke="#BDBDBD" stroke-width="2" stroke-dasharray="1,2"/><line x1="320" y1="391" x2="320" y2="409" stroke="#BDBDBD" stroke-width="2" stroke-dasharray="1,2"/><line x1="320" y1="415" x2="320" y2="433" stroke="#BDBDBD" stroke-width="2" stroke-dasharray="1,2"/><line x1="320" y1="439" x2="320" y2="457" stroke="#BDBDBD" stroke-width="2" stroke-dasharray="1,2"/><line x1="320" y1="463" x2="320" y2="481" stroke="#BDBDBD" stroke-width="2" stroke-dasharray="1,2"/><line x1="320" y1="487" x2="320" y2="505" stroke="#BDBDBD" stroke-width="2" stroke-dasharray="1,2"/><line x1="320" y1="511" x2="320" y2="529" stroke="#BDBDBD" stroke-width="2" stroke-dasharray="1,2"/><line x1="320" y1="535" x2="320" y2="553" stroke="#BDBDBD" stroke-width="2" stroke-dasharray="1,2"/><line x1="320" y1="559" x2="320" y2="577" stroke="#BDBDBD" stroke-width="2" stroke-dasharray="1,2"/><line x1="320" y1="582" x2="320" y2="587" stroke="#BDBDBD" stroke-width="2" stroke-dasharray="1,2"/><line x1="387" y1="176" x2="387" y2="196" stroke="#BDBDBD" stroke-width="2" stroke-dasharray="1,2"/><line x1="387" y1="199" x2="387" y2="217" stroke="#BDBDBD" stroke-width="2" stroke-dasharray="1,2"/><line x1="387" y1="223" x2="387" y2="241" stroke="#BDBDBD" stroke-width="2" stroke-dasharray="1,2"/><line x1="387" y1="247" x2="387" y2="265" stroke="#BDBDBD" stroke-width="2" stroke-dasharray="1,2"/><line x1="387" y1="271" x2="387" y2="289" stroke="#BDBDBD" stroke-width="2" stroke-dasharray="1,2"/><line x1="387" y1="295" x2="387" y2="313" stroke="#BDBDBD" stroke-width="2" stroke-dasharray="1,2"/><line x1="387" y1="319" x2="387" y2="337" stroke="#BDBDBD" stroke-width="2" stroke-dasharray="1,2"/><line x1="387" y1="343" x2="387" y2="361" stroke="#BDBDBD" stroke-width="2" stroke-dasharray="1,2"/><line x1="387" y1="367" x2="387" y2="385" stroke="#BDBDBD" stroke-width="2" stroke-dasharray="1,2"/><line x1="387" y1="391" x2="387" y2="409" stroke="#BDBDBD" stroke-width="2" stroke-dasharray="1,2"/><line x1="387" y1="415" x2="387" y2="433" stroke="#BDBDBD" stroke-width="2" stroke-dasharray="1,2"/><line x1="387" y1="439" x2="387" y2="457" stroke="#BDBDBD" stroke-width="2" stroke-dasharray="1,2"/><line x1="387" y1="463" x2="387" y2="481" stroke="#BDBDBD" stroke-width="2" stroke-dasharray="1,2"/><line x1="387" y1="487" x2="387" y2="505" stroke="#BDBDBD" stroke-width="2" stroke-dasharray="1,2"/><line x1="387" y1="511" x2="387" y2="529" stroke="#BDBDBD" stroke-width="2" stroke-dasharray="1,2"/><line x1="387" y1="535" x2="387" y2="553" stroke="#BDBDBD" stroke-width="2" stroke-dasharray="1,2"/><line x1="387" y1="559" x2="387" y2="577" stroke="#BDBDBD" stroke-width="2" stroke-dasharray="1,2"/><line x1="387" y1="582" x2="387" y2="587" stroke="#BDBDBD" stroke-width="2" stroke-dasharray="1,2"/><line x1="454" y1="176" x2="454" y2="196" stroke="#BDBDBD" stroke-width="2" stroke-dasharray="1,2"/><line x1="454" y1="199" x2="454" y2="217" stroke="#BDBDBD" stroke-width="2" stroke-dasharray="1,2"/><line x1="454" y1="223" x2="454" y2="241" stroke="#BDBDBD" stroke-width="2" stroke-dasharray="1,2"/><line x1="454" y1="247" x2="454" y2="265" stroke="#BDBDBD" stroke-width="2" stroke-dasharray="1,2"/><line x1="454" y1="271" x2="454" y2="289" stroke="#BDBDBD" stroke-width="2" stroke-dasharray="1,2"/><line x1="454" y1="295" x2="454" y2="313" stroke="#BDBDBD" stroke-width="2" stroke-dasharray="1,2"/><line x1="454" y1="319" x2="454" y2="337" stroke="#BDBDBD" stroke-width="2" stroke-dasharray="1,2"/><line x1="454" y1="343" x2="454" y2="361" stroke="#BDBDBD" stroke-width="2" stroke-dasharray="1,2"/><line x1="454" y1="367" x2="454" y2="385" stroke="#BDBDBD" stroke-width="2" stroke-dasharray="1,2"/><line x1="454" y1="391" x2="454" y2="409" stroke="#BDBDBD" stroke-width="2" stroke-dasharray="1,2"/><line x1="454" y1="415" x2="454" y2="433" stroke="#BDBDBD" stroke-width="2" stroke-dasharray="1,2"/><line x1="454" y1="439" x2="454" y2="457" stroke="#BDBDBD" stroke-width="2" stroke-dasharray="1,2"/><line x1="454" y1="463" x2="454" y2="481" stroke="#BDBDBD" stroke-width="2" stroke-dasharray="1,2"/><line x1="454" y1="487" x2="454" y2="505" stroke="#BDBDBD" stroke-width="2" stroke-dasharray="1,2"/><line x1="454" y1="511" x2="454" y2="529" stroke="#BDBDBD" stroke-width="2" stroke-dasharray="1,2"/><line x1="454" y1="535" x2="454" y2="553" stroke="#BDBDBD" stroke-width="2" stroke-dasharray="1,2"/><line x1="454" y1="559" x2="454" y2="577" stroke="#BDBDBD" stroke-width="2" stroke-dasharray="1,2"/><line x1="454" y1="582" x2="454" y2="587" stroke="#BDBDBD" stroke-width="2" stroke-dasharray="1,2"/><line x1="588" y1="176" x2="588" y2="196" stroke="#BDBDBD" stroke-width="2" stroke-dasharray="1,2"/><line x1="588" y1="199" x2="588" y2="217" stroke="#BDBDBD" stroke-width="2" stroke-dasharray="1,2"/><line x1="588" y1="223" x2="588" y2="241" stroke="#BDBDBD" stroke-width="2" stroke-dasharray="1,2"/><line x1="588" y1="247" x2="588" y2="265" stroke="#BDBDBD" stroke-width="2" stroke-dasharray="1,2"/><line x1="588" y1="271" x2="588" y2="289" stroke="#BDBDBD" stroke-width="2" stroke-dasharray="1,2"/><line x1="588" y1="295" x2="588" y2="313" stroke="#BDBDBD" stroke-width="2" stroke-dasharray="1,2"/><line x1="588" y1="319" x2="588" y2="337" stroke="#BDBDBD" stroke-width="2" stroke-dasharray="1,2"/><line x1="588" y1="343" x2="588" y2="361" stroke="#BDBDBD" stroke-width="2" stroke-dasharray="1,2"/><line x1="588" y1="367" x2="588" y2="385" stroke="#BDBDBD" stroke-width="2" stroke-dasharray="1,2"/><line x1="588" y1="391" x2="588" y2="409" stroke="#BDBDBD" stroke-width="2" stroke-dasharray="1,2"/><line x1="588" y1="415" x2="588" y2="433" stroke="#BDBDBD" stroke-width="2" stroke-dasharray="1,2"/><line x1="588" y1="439" x2="588" y2="457" stroke="#BDBDBD" stroke-width="2" stroke-dasharray="1,2"/><line x1="588" y1="463" x2="588" y2="481" stroke="#BDBDBD" stroke-width="2" stroke-dasharray="1,2"/><line x1="588" y1="487" x2="588" y2="505" stroke="#BDBDBD" stroke-width="2" stroke-dasharray="1,2"/><line x1="588" y1="511" x2="588" y2="529" stroke="#BDBDBD" stroke-width="2" stroke-dasharray="1,2"/><line x1="588" y1="535" x2="588" y2="553" stroke="#BDBDBD" stroke-width="2" stroke-dasharray="1,2"/><line x1="588" y1="559" x2="588" y2="577" stroke="#BDBDBD" stroke-width="2" stroke-dasharray="1,2"/><line x1="588" y1="582" x2="588" y2="587" stroke="#BDBDBD" stroke-width="2" stroke-dasharray="1,2"/><line x1="654" y1="176" x2="654" y2="196" stroke="#BDBDBD" stroke-width="2" stroke-dasharray="1,2"/><line x1="654" y1="199" x2="654" y2="217" stroke="#BDBDBD" stroke-width="2" stroke-dasharray="1,2"/><line x1="654" y1="223" x2="654" y2="241" stroke="#BDBDBD" stroke-width="2" stroke-dasharray="1,2"/><line x1="654" y1="247" x2="654" y2="265" stroke="#BDBDBD" stroke-width="2" stroke-dasharray="1,2"/><line x1="654" y1="271" x2="654" y2="289" stroke="#BDBDBD" stroke-width="2" stroke-dasharray="1,2"/><line x1="654" y1="295" x2="654" y2="313" stroke="#BDBDBD" stroke-width="2" stroke-dasharray="1,2"/><line x1="654" y1="319" x2="654" y2="337" stroke="#BDBDBD" stroke-width="2" stroke-dasharray="1,2"/><line x1="654" y1="343" x2="654" y2="361" stroke="#BDBDBD" stroke-width="2" stroke-dasharray="1,2"/><line x1="654" y1="367" x2="654" y2="385" stroke="#BDBDBD" stroke-width="2" stroke-dasharray="1,2"/><line x1="654" y1="391" x2="654" y2="409" stroke="#BDBDBD" stroke-width="2" stroke-dasharray="1,2"/><line x1="654" y1="415" x2="654" y2="433" stroke="#BDBDBD" stroke-width="2" stroke-dasharray="1,2"/><line x1="654" y1="439" x2="654" y2="457" stroke="#BDBDBD" stroke-width="2" stroke-dasharray="1,2"/><line x1="654" y1="463" x2="654" y2="481" stroke="#BDBDBD" stroke-width="2" stroke-dasharray="1,2"/><line x1="654" y1="487" x2="654" y2="505" stroke="#BDBDBD" stroke-width="2" stroke-dasharray="1,2"/><line x1="654" y1="511" x2="654" y2="529" stroke="#BDBDBD" stroke-width="2" stroke-dasharray="1,2"/><line x1="654" y1="535" x2="654" y2="553" stroke="#BDBDBD" stroke-width="2" stroke-dasharray="1,2"/><line x1="654" y1="559" x2="654" y2="577" stroke="#BDBDBD" stroke-width="2" stroke-dasharray="1,2"/><line x1="654" y1="582" x2="654" y2="587" stroke="#BDBDBD" stroke-width="2" stroke-dasharray="1,2"/><line x1="721" y1="176" x2="721" y2="196" stroke="#BDBDBD" stroke-width="2" stroke-dasharray="1,2"/><line x1="721" y1="199" x2="721" y2="217" stroke="#BDBDBD" stroke-width="2" stroke-dasharray="1,2"/><line x1="721" y1="223" x2="721" y2="241" stroke="#BDBDBD" stroke-width="2" stroke-dasharray="1,2"/><line x1="721" y1="247" x2="721" y2="265" stroke="#BDBDBD" stroke-width="2" stroke-dasharray="1,2"/><line x1="721" y1="271" x2="721" y2="289" stroke="#BDBDBD" stroke-width="2" stroke-dasharray="1,2"/><line x1="721" y1="295" x2="721" y2="313" stroke="#BDBDBD" stroke-width="2" stroke-dasharray="1,2"/><line x1="721" y1="319" x2="721" y2="337" stroke="#BDBDBD" stroke-width="2" stroke-dasharray="1,2"/><line x1="721" y1="343" x2="721" y2="361" stroke="#BDBDBD" stroke-width="2" stroke-dasharray="1,2"/><line x1="721" y1="367" x2="721" y2="385" stroke="#BDBDBD" stroke-width="2" stroke-dasharray="1,2"/><line x1="721" y1="391" x2="721" y2="409" stroke="#BDBDBD" stroke-width="2" stroke-dasharray="1,2"/><line x1="721" y1="415" x2="721" y2="433" stroke="#BDBDBD" stroke-width="2" stroke-dasharray="1,2"/><line x1="721" y1="439" x2="721" y2="457" stroke="#BDBDBD" stroke-width="2" stroke-dasharray="1,2"/><line x1="721" y1="463" x2="721" y2="481" stroke="#BDBDBD" stroke-width="2" stroke-dasharray="1,2"/><line x1="721" y1="487" x2="721" y2="505" stroke="#BDBDBD" stroke-width="2" stroke-dasharray="1,2"/><line x1="721" y1="511" x2="721" y2="529" stroke="#BDBDBD" stroke-width="2" stroke-dasharray="1,2"/><line x1="721" y1="535" x2="721" y2="553" stroke="#BDBDBD" stroke-width="2" stroke-dasharray="1,2"/><line x1="721" y1="559" x2="721" y2="577" stroke="#BDBDBD" stroke-width="2" stroke-dasharray="1,2"/><line x1="721" y1="582" x2="721" y2="587" stroke="#BDBDBD" stroke-width="2" stroke-dasharray="1,2"/><line x1="788" y1="176" x2="788" y2="196" stroke="#BDBDBD" stroke-width="2" stroke-dasharray="1,2"/><line x1="788" y1="199" x2="788" y2="217" stroke="#BDBDBD" stroke-width="2" stroke-dasharray="1,2"/><line x1="788" y1="223" x2="788" y2="241" stroke="#BDBDBD" stroke-width="2" stroke-dasharray="1,2"/><line x1="788" y1="247" x2="788" y2="265" stroke="#BDBDBD" stroke-width="2" stroke-dasharray="1,2"/><line x1="788" y1="271" x2="788" y2="289" stroke="#BDBDBD" stroke-width="2" stroke-dasharray="1,2"/><line x1="788" y1="295" x2="788" y2="313" stroke="#BDBDBD" stroke-width="2" stroke-dasharray="1,2"/><line x1="788" y1="319" x2="788" y2="337" stroke="#BDBDBD" stroke-width="2" stroke-dasharray="1,2"/><line x1="788" y1="343" x2="788" y2="361" stroke="#BDBDBD" stroke-width="2" stroke-dasharray="1,2"/><line x1="788" y1="367" x2="788" y2="385" stroke="#BDBDBD" stroke-width="2" stroke-dasharray="1,2"/><line x1="788" y1="391" x2="788" y2="409" stroke="#BDBDBD" stroke-width="2" stroke-dasharray="1,2"/><line x1="788" y1="415" x2="788" y2="433" stroke="#BDBDBD" stroke-width="2" stroke-dasharray="1,2"/><line x1="788" y1="439" x2="788" y2="457" stroke="#BDBDBD" stroke-width="2" stroke-dasharray="1,2"/><line x1="788" y1="463" x2="788" y2="481" stroke="#BDBDBD" stroke-width="2" stroke-dasharray="1,2"/><line x1="788" y1="487" x2="788" y2="505" stroke="#BDBDBD" stroke-width="2" stroke-dasharray="1,2"/><line x1="788" y1="511" x2="788" y2="529" stroke="#BDBDBD" stroke-width="2" stroke-dasharray="1,2"/><line x1="788" y1="535" x2="788" y2="553" stroke="#BDBDBD" stroke-width="2" stroke-dasharray="1,2"/><line x1="788" y1="559" x2="788" y2="577" stroke="#BDBDBD" stroke-width="2" stroke-dasharray="1,2"/><line x1="788" y1="582" x2="788" y2="587" stroke="#BDBDBD" stroke-width="2" stroke-dasharray="1,2"/><rect x="188" y="176" width="666" height="2" fill="#4A4A4A"/><rect x="188" y="193" width="666" height="2" fill="#4A4A4A"/><rect x="335" y="176" width="314" height="19" fill="#242424"/><rect x="852" y="176" width="2" height="19" fill="#111"/><rect x="493" y="202" width="2" height="15" fill="#A6A6A6"/><rect x="649" y="202" width="2" height="15" fill="#A6A6A6"/><rect x="188" y="217" width="303" height="2" fill="#4A4A4A"/><rect x="491" y="200" width="158" height="2" fill="#4A4A4A"/><rect x="647" y="217" width="207" height="2" fill="#4A4A4A"/><rect x="491" y="200" width="2" height="19" fill="#4A4A4A"/><rect x="647" y="200" width="2" height="19" fill="#4A4A4A"/><rect x="415" y="226" width="2" height="15" fill="#A6A6A6"/><rect x="493" y="226" width="2" height="15" fill="#A6A6A6"/><rect x="571" y="226" width="2" height="15" fill="#A6A6A6"/><rect x="649" y="226" width="2" height="15" fill="#A6A6A6"/><rect x="188" y="241" width="225" height="2" fill="#4A4A4A"/><rect x="413" y="224" width="80" height="2" fill="#4A4A4A"/><rect x="491" y="241" width="80" height="2" fill="#4A4A4A"/><rect x="569" y="224" width="80" height="2" fill="#4A4A4A"/><rect x="647" y="241" width="207" height="2" fill="#4A4A4A"/><rect x="413" y="224" width="2" height="19" fill="#4A4A4A"/><rect x="491" y="224" width="2" height="19" fill="#4A4A4A"/><rect x="569" y="224" width="2" height="19" fill="#4A4A4A"/><rect x="647" y="224" width="2" height="19" fill="#4A4A4A"/><rect x="376" y="250" width="2" height="15" fill="#A6A6A6"/><rect x="415" y="250" width="2" height="15" fill="#A6A6A6"/><rect x="454" y="250" width="2" height="15" fill="#A6A6A6"/><rect x="493" y="250" width="2" height="15" fill="#A6A6A6"/><rect x="532" y="250" width="2" height="15" fill="#A6A6A6"/><rect x="571" y="250" width="2" height="15" fill="#A6A6A6"/><rect x="610" y="250" width="2" height="15" fill="#A6A6A6"/><rect x="649" y="250" width="2" height="15" fill="#A6A6A6"/><rect x="188" y="265" width="186" height="2" fill="#4A4A4A"/><rect x="374" y="248" width="41" height="2" fill="#4A4A4A"/><rect x="413" y="265" width="41" height="2" fill="#4A4A4A"/><rect x="452" y="248" width="41" height="2" fill="#4A4A4A"/><rect x="491" y="265" width="41" height="2" fill="#4A4A4A"/><rect x="530" y="248" width="41" height="2" fill="#4A4A4A"/><rect x="569" y="265" width="41" height="2" fill="#4A4A4A"/><rect x="608" y="248" width="41" height="2" fill="#4A4A4A"/><rect x="647" y="265" width="207" height="2" fill="#4A4A4A"/><rect x="374" y="248" width="2" height="19" fill="#4A4A4A"/><rect x="413" y="248" width="2" height="19" fill="#4A4A4A"/><rect x="452" y="248" width="2" height="19" fill="#4A4A4A"/><rect x="491" y="248" width="2" height="19" fill="#4A4A4A"/><rect x="530" y="248" width="2" height="19" fill="#4A4A4A"/><rect x="569" y="248" width="2" height="19" fill="#4A4A4A"/><rect x="608" y="248" width="2" height="19" fill="#4A4A4A"/><rect x="647" y="248" width="2" height="19" fill="#4A4A4A"/><rect x="357" y="274" width="2" height="15" fill="#A6A6A6"/><rect x="376" y="274" width="2" height="15" fill="#A6A6A6"/><rect x="396" y="274" width="2" height="15" fill="#A6A6A6"/><rect x="415" y="274" width="2" height="15" fill="#A6A6A6"/><rect x="435" y="274" width="2" height="15" fill="#A6A6A6"/><rect x="454" y="274" width="2" height="15" fill="#A6A6A6"/><rect x="474" y="274" width="2" height="15" fill="#A6A6A6"/><rect x="493" y="274" width="2" height="15" fill="#A6A6A6"/><rect x="513" y="274" width="2" height="15" fill="#A6A6A6"/><rect x="532" y="274" width="2" height="15" fill="#A6A6A6"/><rect x="552" y="274" width="2" height="15" fill="#A6A6A6"/><rect x="571" y="274" width="2" height="15" fill="#A6A6A6"/><rect x="591" y="274" width="2" height="15" fill="#A6A6A6"/><rect x="610" y="274" width="2" height="15" fill="#A6A6A6"/><rect x="630" y="274" width="2" height="15" fill="#A6A6A6"/><rect x="649" y="274" width="2" height="15" fill="#A6A6A6"/><rect x="188" y="289" width="167" height="2" fill="#4A4A4A"/><rect x="355" y="272" width="21" height="2" fill="#4A4A4A"/><rect x="374" y="289" width="22" height="2" fill="#4A4A4A"/><rect x="394" y="272" width="21" height="2" fill="#4A4A4A"/><rect x="413" y="289" width="22" height="2" fill="#4A4A4A"/><rect x="433" y="272" width="21" height="2" fill="#4A4A4A"/><rect x="452" y="289" width="22" height="2" fill="#4A4A4A"/><rect x="472" y="272" width="21" height="2" fill="#4A4A4A"/><rect x="491" y="289" width="22" height="2" fill="#4A4A4A"/><rect x="511" y="272" width="21" height="2" fill="#4A4A4A"/><rect x="530" y="289" width="22" height="2" fill="#4A4A4A"/><rect x="550" y="272" width="21" height="2" fill="#4A4A4A"/><rect x="569" y="289" width="22" height="2" fill="#4A4A4A"/><rect x="589" y="272" width="21" height="2" fill="#4A4A4A"/><rect x="608" y="289" width="22" height="2" fill="#4A4A4A"/><rect x="628" y="272" width="21" height="2" fill="#4A4A4A"/><rect x="647" y="289" width="207" height="2" fill="#4A4A4A"/><rect x="355" y="272" width="2" height="19" fill="#4A4A4A"/><rect x="374" y="272" width="2" height="19" fill="#4A4A4A"/><rect x="394" y="272" width="2" height="19" fill="#4A4A4A"/><rect x="413" y="272" width="2" height="19" fill="#4A4A4A"/><rect x="433" y="272" width="2" height="19" fill="#4A4A4A"/><rect x="452" y="272" width="2" height="19" fill="#4A4A4A"/><rect x="472" y="272" width="2" height="19" fill="#4A4A4A"/><rect x="491" y="272" width="2" height="19" fill="#4A4A4A"/><rect x="511" y="272" width="2" height="19" fill="#4A4A4A"/><rect x="530" y="272" width="2" height="19" fill="#4A4A4A"/><rect x="550" y="272" width="2" height="19" fill="#4A4A4A"/><rect x="569" y="272" width="2" height="19" fill="#4A4A4A"/><rect x="589" y="272" width="2" height="19" fill="#4A4A4A"/><rect x="608" y="272" width="2" height="19" fill="#4A4A4A"/><rect x="628" y="272" width="2" height="19" fill="#4A4A4A"/><rect x="647" y="272" width="2" height="19" fill="#4A4A4A"/><rect x="347" y="298" width="2" height="15" fill="#A6A6A6"/><rect x="357" y="298" width="2" height="15" fill="#A6A6A6"/><rect x="367" y="298" width="2" height="15" fill="#A6A6A6"/><rect x="376" y="298" width="2" height="15" fill="#A6A6A6"/><rect x="386" y="298" width="2" height="15" fill="#A6A6A6"/><rect x="396" y="298" width="2" height="15" fill="#A6A6A6"/><rect x="405" y="298" width="2" height="15" fill="#A6A6A6"/><rect x="415" y="298" width="2" height="15" fill="#A6A6A6"/><rect x="425" y="298" width="2" height="15" fill="#A6A6A6"/><rect x="435" y="298" width="2" height="15" fill="#A6A6A6"/><rect x="444" y="298" width="2" height="15" fill="#A6A6A6"/><rect x="454" y="298" width="2" height="15" fill="#A6A6A6"/><rect x="464" y="298" width="2" height="15" fill="#A6A6A6"/><rect x="474" y="298" width="2" height="15" fill="#A6A6A6"/><rect x="483" y="298" width="2" height="15" fill="#A6A6A6"/><rect x="493" y="298" width="2" height="15" fill="#A6A6A6"/><rect x="503" y="298" width="2" height="15" fill="#A6A6A6"/><rect x="513" y="298" width="2" height="15" fill="#A6A6A6"/><rect x="522" y="298" width="2" height="15" fill="#A6A6A6"/><rect x="532" y="298" width="2" height="15" fill="#A6A6A6"/><rect x="542" y="298" width="2" height="15" fill="#A6A6A6"/><rect x="552" y="298" width="2" height="15" fill="#A6A6A6"/><rect x="561" y="298" width="2" height="15" fill="#A6A6A6"/><rect x="571" y="298" width="2" height="15" fill="#A6A6A6"/><rect x="581" y="298" width="2" height="15" fill="#A6A6A6"/><rect x="591" y="298" width="2" height="15" fill="#A6A6A6"/><rect x="600" y="298" width="2" height="15" fill="#A6A6A6"/><rect x="610" y="298" width="2" height="15" fill="#A6A6A6"/><rect x="620" y="298" width="2" height="15" fill="#A6A6A6"/><rect x="630" y="298" width="2" height="15" fill="#A6A6A6"/><rect x="639" y="298" width="2" height="15" fill="#A6A6A6"/><rect x="649" y="298" width="2" height="15" fill="#A6A6A6"/><rect x="188" y="313" width="157" height="2" fill="#4A4A4A"/><rect x="345" y="296" width="12" height="2" fill="#4A4A4A"/><rect x="355" y="313" width="12" height="2" fill="#4A4A4A"/><rect x="365" y="296" width="11" height="2" fill="#4A4A4A"/><rect x="374" y="313" width="12" height="2" fill="#4A4A4A"/><rect x="384" y="296" width="12" height="2" fill="#4A4A4A"/><rect x="394" y="313" width="11" height="2" fill="#4A4A4A"/><rect x="403" y="296" width="12" height="2" fill="#4A4A4A"/><rect x="413" y="313" width="12" height="2" fill="#4A4A4A"/><rect x="423" y="296" width="12" height="2" fill="#4A4A4A"/><rect x="433" y="313" width="11" height="2" fill="#4A4A4A"/><rect x="442" y="296" width="12" height="2" fill="#4A4A4A"/><rect x="452" y="313" width="12" height="2" fill="#4A4A4A"/><rect x="462" y="296" width="12" height="2" fill="#4A4A4A"/><rect x="472" y="313" width="11" height="2" fill="#4A4A4A"/><rect x="481" y="296" width="12" height="2" fill="#4A4A4A"/><rect x="491" y="313" width="12" height="2" fill="#4A4A4A"/><rect x="501" y="296" width="12" height="2" fill="#4A4A4A"/><rect x="511" y="313" width="11" height="2" fill="#4A4A4A"/><rect x="520" y="296" width="12" height="2" fill="#4A4A4A"/><rect x="530" y="313" width="12" height="2" fill="#4A4A4A"/><rect x="540" y="296" width="12" height="2" fill="#4A4A4A"/><rect x="550" y="313" width="11" height="2" fill="#4A4A4A"/><rect x="559" y="296" width="12" height="2" fill="#4A4A4A"/><rect x="569" y="313" width="12" height="2" fill="#4A4A4A"/><rect x="579" y="296" width="12" height="2" fill="#4A4A4A"/><rect x="589" y="313" width="11" height="2" fill="#4A4A4A"/><rect x="598" y="296" width="12" height="2" fill="#4A4A4A"/><rect x="608" y="313" width="12" height="2" fill="#4A4A4A"/><rect x="618" y="296" width="12" height="2" fill="#4A4A4A"/><rect x="628" y="313" width="11" height="2" fill="#4A4A4A"/><rect x="637" y="296" width="12" height="2" fill="#4A4A4A"/><rect x="647" y="313" width="207" height="2" fill="#4A4A4A"/><rect x="345" y="296" width="2" height="19" fill="#4A4A4A"/><rect x="355" y="296" width="2" height="19" fill="#4A4A4A"/><rect x="365" y="296" width="2" height="19" fill="#4A4A4A"/><rect x="374" y="296" width="2" height="19" fill="#4A4A4A"/><rect x="384" y="296" width="2" height="19" fill="#4A4A4A"/><rect x="394" y="296" width="2" height="19" fill="#4A4A4A"/><rect x="403" y="296" width="2" height="19" fill="#4A4A4A"/><rect x="413" y="296" width="2" height="19" fill="#4A4A4A"/><rect x="423" y="296" width="2" height="19" fill="#4A4A4A"/><rect x="433" y="296" width="2" height="19" fill="#4A4A4A"/><rect x="442" y="296" width="2" height="19" fill="#4A4A4A"/><rect x="452" y="296" width="2" height="19" fill="#4A4A4A"/><rect x="462" y="296" width="2" height="19" fill="#4A4A4A"/><rect x="472" y="296" width="2" height="19" fill="#4A4A4A"/><rect x="481" y="296" width="2" height="19" fill="#4A4A4A"/><rect x="491" y="296" width="2" height="19" fill="#4A4A4A"/><rect x="501" y="296" width="2" height="19" fill="#4A4A4A"/><rect x="511" y="296" width="2" height="19" fill="#4A4A4A"/><rect x="520" y="296" width="2" height="19" fill="#4A4A4A"/><rect x="530" y="296" width="2" height="19" fill="#4A4A4A"/><rect x="540" y="296" width="2" height="19" fill="#4A4A4A"/><rect x="550" y="296" width="2" height="19" fill="#4A4A4A"/><rect x="559" y="296" width="2" height="19" fill="#4A4A4A"/><rect x="569" y="296" width="2" height="19" fill="#4A4A4A"/><rect x="579" y="296" width="2" height="19" fill="#4A4A4A"/><rect x="589" y="296" width="2" height="19" fill="#4A4A4A"/><rect x="598" y="296" width="2" height="19" fill="#4A4A4A"/><rect x="608" y="296" width="2" height="19" fill="#4A4A4A"/><rect x="618" y="296" width="2" height="19" fill="#4A4A4A"/><rect x="628" y="296" width="2" height="19" fill="#4A4A4A"/><rect x="637" y="296" width="2" height="19" fill="#4A4A4A"/><rect x="647" y="296" width="2" height="19" fill="#4A4A4A"/><rect x="342" y="322" width="2" height="15" fill="#A6A6A6"/><rect x="352" y="322" width="2" height="15" fill="#A6A6A6"/><rect x="362" y="322" width="2" height="15" fill="#A6A6A6"/><rect x="371" y="322" width="2" height="15" fill="#A6A6A6"/><rect x="381" y="322" width="2" height="15" fill="#A6A6A6"/><rect x="391" y="322" width="2" height="15" fill="#A6A6A6"/><rect x="401" y="322" width="2" height="15" fill="#A6A6A6"/><rect x="410" y="322" width="2" height="15" fill="#A6A6A6"/><rect x="420" y="322" width="2" height="15" fill="#A6A6A6"/><rect x="430" y="322" width="2" height="15" fill="#A6A6A6"/><rect x="440" y="322" width="2" height="15" fill="#A6A6A6"/><rect x="449" y="322" width="2" height="15" fill="#A6A6A6"/><rect x="459" y="322" width="2" height="15" fill="#A6A6A6"/><rect x="469" y="322" width="2" height="15" fill="#A6A6A6"/><rect x="479" y="322" width="2" height="15" fill="#A6A6A6"/><rect x="488" y="322" width="2" height="15" fill="#A6A6A6"/><rect x="498" y="322" width="2" height="15" fill="#A6A6A6"/><rect x="508" y="322" width="2" height="15" fill="#A6A6A6"/><rect x="518" y="322" width="2" height="15" fill="#A6A6A6"/><rect x="527" y="322" width="2" height="15" fill="#A6A6A6"/><rect x="537" y="322" width="2" height="15" fill="#A6A6A6"/><rect x="547" y="322" width="2" height="15" fill="#A6A6A6"/><rect x="556" y="322" width="2" height="15" fill="#A6A6A6"/><rect x="566" y="322" width="2" height="15" fill="#A6A6A6"/><rect x="576" y="322" width="2" height="15" fill="#A6A6A6"/><rect x="586" y="322" width="2" height="15" fill="#A6A6A6"/><rect x="595" y="322" width="2" height="15" fill="#A6A6A6"/><rect x="605" y="322" width="2" height="15" fill="#A6A6A6"/><rect x="615" y="322" width="2" height="15" fill="#A6A6A6"/><rect x="625" y="322" width="2" height="15" fill="#A6A6A6"/><rect x="634" y="322" width="2" height="15" fill="#A6A6A6"/><rect x="644" y="322" width="2" height="15" fill="#A6A6A6"/><rect x="188" y="337" width="152" height="2" fill="#4A4A4A"/><rect x="340" y="320" width="7" height="2" fill="#4A4A4A"/><rect x="345" y="337" width="7" height="2" fill="#4A4A4A"/><rect x="350" y="320" width="7" height="2" fill="#4A4A4A"/><rect x="355" y="337" width="7" height="2" fill="#4A4A4A"/><rect x="360" y="320" width="7" height="2" fill="#4A4A4A"/><rect x="365" y="337" width="6" height="2" fill="#4A4A4A"/><rect x="369" y="320" width="7" height="2" fill="#4A4A4A"/><rect x="374" y="337" width="7" height="2" fill="#4A4A4A"/><rect x="379" y="320" width="7" height="2" fill="#4A4A4A"/><rect x="384" y="337" width="7" height="2" fill="#4A4A4A"/><rect x="389" y="320" width="7" height="2" fill="#4A4A4A"/><rect x="394" y="337" width="7" height="2" fill="#4A4A4A"/><rect x="399" y="320" width="6" height="2" fill="#4A4A4A"/><rect x="403" y="337" width="7" height="2" fill="#4A4A4A"/><rect x="408" y="320" width="7" height="2" fill="#4A4A4A"/><rect x="413" y="337" width="7" height="2" fill="#4A4A4A"/><rect x="418" y="320" width="7" height="2" fill="#4A4A4A"/><rect x="423" y="337" width="7" height="2" fill="#4A4A4A"/><rect x="428" y="320" width="7" height="2" fill="#4A4A4A"/><rect x="433" y="337" width="7" height="2" fill="#4A4A4A"/><rect x="438" y="320" width="6" height="2" fill="#4A4A4A"/><rect x="442" y="337" width="7" height="2" fill="#4A4A4A"/><rect x="447" y="320" width="7" height="2" fill="#4A4A4A"/><rect x="452" y="337" width="7" height="2" fill="#4A4A4A"/><rect x="457" y="320" width="7" height="2" fill="#4A4A4A"/><rect x="462" y="337" width="7" height="2" fill="#4A4A4A"/><rect x="467" y="320" width="7" height="2" fill="#4A4A4A"/><rect x="472" y="337" width="7" height="2" fill="#4A4A4A"/><rect x="477" y="320" width="6" height="2" fill="#4A4A4A"/><rect x="481" y="337" width="7" height="2" fill="#4A4A4A"/><rect x="486" y="320" width="7" height="2" fill="#4A4A4A"/><rect x="491" y="337" width="7" height="2" fill="#4A4A4A"/><rect x="496" y="320" width="7" height="2" fill="#4A4A4A"/><rect x="501" y="337" width="7" height="2" fill="#4A4A4A"/><rect x="506" y="320" width="7" height="2" fill="#4A4A4A"/><rect x="511" y="337" width="7" height="2" fill="#4A4A4A"/><rect x="516" y="320" width="6" height="2" fill="#4A4A4A"/><rect x="520" y="337" width="7" height="2" fill="#4A4A4A"/><rect x="525" y="320" width="7" height="2" fill="#4A4A4A"/><rect x="530" y="337" width="7" height="2" fill="#4A4A4A"/><rect x="535" y="320" width="7" height="2" fill="#4A4A4A"/><rect x="540" y="337" width="7" height="2" fill="#4A4A4A"/><rect x="545" y="320" width="7" height="2" fill="#4A4A4A"/><rect x="550" y="337" width="6" height="2" fill="#4A4A4A"/><rect x="554" y="320" width="7" height="2" fill="#4A4A4A"/><rect x="559" y="337" width="7" height="2" fill="#4A4A4A"/><rect x="564" y="320" width="7" height="2" fill="#4A4A4A"/><rect x="569" y="337" width="7" height="2" fill="#4A4A4A"/><rect x="574" y="320" width="7" height="2" fill="#4A4A4A"/><rect x="579" y="337" width="7" height="2" fill="#4A4A4A"/><rect x="584" y="320" width="7" height="2" fill="#4A4A4A"/><rect x="589" y="337" width="6" height="2" fill="#4A4A4A"/><rect x="593" y="320" width="7" height="2" fill="#4A4A4A"/><rect x="598" y="337" width="7" height="2" fill="#4A4A4A"/><rect x="603" y="320" width="7" height="2" fill="#4A4A4A"/><rect x="608" y="337" width="7" height="2" fill="#4A4A4A"/><rect x="613" y="320" width="7" height="2" fill="#4A4A4A"/><rect x="618" y="337" width="7" height="2" fill="#4A4A4A"/><rect x="623" y="320" width="7" height="2" fill="#4A4A4A"/><rect x="628" y="337" width="6" height="2" fill="#4A4A4A"/><rect x="632" y="320" width="7" height="2" fill="#4A4A4A"/><rect x="637" y="337" width="7" height="2" fill="#4A4A4A"/><rect x="642" y="320" width="7" height="2" fill="#4A4A4A"/><rect x="647" y="337" width="207" height="2" fill="#4A4A4A"/><rect x="340" y="320" width="2" height="19" fill="#4A4A4A"/><rect x="345" y="320" width="2" height="19" fill="#4A4A4A"/><rect x="350" y="320" width="2" height="19" fill="#4A4A4A"/><rect x="355" y="320" width="2" height="19" fill="#4A4A4A"/><rect x="360" y="320" width="2" height="19" fill="#4A4A4A"/><rect x="365" y="320" width="2" height="19" fill="#4A4A4A"/><rect x="369" y="320" width="2" height="19" fill="#4A4A4A"/><rect x="374" y="320" width="2" height="19" fill="#4A4A4A"/><rect x="379" y="320" width="2" height="19" fill="#4A4A4A"/><rect x="384" y="320" width="2" height="19" fill="#4A4A4A"/><rect x="389" y="320" width="2" height="19" fill="#4A4A4A"/><rect x="394" y="320" width="2" height="19" fill="#4A4A4A"/><rect x="399" y="320" width="2" height="19" fill="#4A4A4A"/><rect x="403" y="320" width="2" height="19" fill="#4A4A4A"/><rect x="408" y="320" width="2" height="19" fill="#4A4A4A"/><rect x="413" y="320" width="2" height="19" fill="#4A4A4A"/><rect x="418" y="320" width="2" height="19" fill="#4A4A4A"/><rect x="423" y="320" width="2" height="19" fill="#4A4A4A"/><rect x="428" y="320" width="2" height="19" fill="#4A4A4A"/><rect x="433" y="320" width="2" height="19" fill="#4A4A4A"/><rect x="438" y="320" width="2" height="19" fill="#4A4A4A"/><rect x="442" y="320" width="2" height="19" fill="#4A4A4A"/><rect x="447" y="320" width="2" height="19" fill="#4A4A4A"/><rect x="452" y="320" width="2" height="19" fill="#4A4A4A"/><rect x="457" y="320" width="2" height="19" fill="#4A4A4A"/><rect x="462" y="320" width="2" height="19" fill="#4A4A4A"/><rect x="467" y="320" width="2" height="19" fill="#4A4A4A"/><rect x="472" y="320" width="2" height="19" fill="#4A4A4A"/><rect x="477" y="320" width="2" height="19" fill="#4A4A4A"/><rect x="481" y="320" width="2" height="19" fill="#4A4A4A"/><rect x="486" y="320" width="2" height="19" fill="#4A4A4A"/><rect x="491" y="320" width="2" height="19" fill="#4A4A4A"/><rect x="496" y="320" width="2" height="19" fill="#4A4A4A"/><rect x="501" y="320" width="2" height="19" fill="#4A4A4A"/><rect x="506" y="320" width="2" height="19" fill="#4A4A4A"/><rect x="511" y="320" width="2" height="19" fill="#4A4A4A"/><rect x="516" y="320" width="2" height="19" fill="#4A4A4A"/><rect x="520" y="320" width="2" height="19" fill="#4A4A4A"/><rect x="525" y="320" width="2" height="19" fill="#4A4A4A"/><rect x="530" y="320" width="2" height="19" fill="#4A4A4A"/><rect x="535" y="320" width="2" height="19" fill="#4A4A4A"/><rect x="540" y="320" width="2" height="19" fill="#4A4A4A"/><rect x="545" y="320" width="2" height="19" fill="#4A4A4A"/><rect x="550" y="320" width="2" height="19" fill="#4A4A4A"/><rect x="554" y="320" width="2" height="19" fill="#4A4A4A"/><rect x="559" y="320" width="2" height="19" fill="#4A4A4A"/><rect x="564" y="320" width="2" height="19" fill="#4A4A4A"/><rect x="569" y="320" width="2" height="19" fill="#4A4A4A"/><rect x="574" y="320" width="2" height="19" fill="#4A4A4A"/><rect x="579" y="320" width="2" height="19" fill="#4A4A4A"/><rect x="584" y="320" width="2" height="19" fill="#4A4A4A"/><rect x="589" y="320" width="2" height="19" fill="#4A4A4A"/><rect x="593" y="320" width="2" height="19" fill="#4A4A4A"/><rect x="598" y="320" width="2" height="19" fill="#4A4A4A"/><rect x="603" y="320" width="2" height="19" fill="#4A4A4A"/><rect x="608" y="320" width="2" height="19" fill="#4A4A4A"/><rect x="613" y="320" width="2" height="19" fill="#4A4A4A"/><rect x="618" y="320" width="2" height="19" fill="#4A4A4A"/><rect x="623" y="320" width="2" height="19" fill="#4A4A4A"/><rect x="628" y="320" width="2" height="19" fill="#4A4A4A"/><rect x="632" y="320" width="2" height="19" fill="#4A4A4A"/><rect x="637" y="320" width="2" height="19" fill="#4A4A4A"/><rect x="642" y="320" width="2" height="19" fill="#4A4A4A"/><rect x="647" y="320" width="2" height="19" fill="#4A4A4A"/><rect x="188" y="361" width="149" height="2" fill="#4A4A4A"/><rect x="649" y="361" width="205" height="2" fill="#4A4A4A"/><rect x="337" y="344" width="312" height="19" fill="#3A3A3A"/><rect x="337" y="346" width="1" height="17" fill="#555"/><rect x="340" y="344" width="1" height="19" fill="#303030"/><rect x="342" y="344" width="1" height="19" fill="#303030"/><rect x="344" y="344" width="1" height="19" fill="#303030"/><rect x="346" y="344" width="1" height="19" fill="#303030"/><rect x="348" y="344" width="1" height="19" fill="#303030"/><rect x="350" y="344" width="1" height="19" fill="#303030"/><rect x="352" y="344" width="1" height="19" fill="#303030"/><rect x="354" y="344" width="1" height="19" fill="#303030"/><rect x="356" y="344" width="1" height="19" fill="#303030"/><rect x="358" y="344" width="1" height="19" fill="#303030"/><rect x="360" y="344" width="1" height="19" fill="#303030"/><rect x="362" y="344" width="1" height="19" fill="#303030"/><rect x="364" y="344" width="1" height="19" fill="#303030"/><rect x="366" y="344" width="1" height="19" fill="#303030"/><rect x="368" y="344" width="1" height="19" fill="#303030"/><rect x="370" y="344" width="1" height="19" fill="#303030"/><rect x="372" y="344" width="1" height="19" fill="#303030"/><rect x="374" y="344" width="1" height="19" fill="#303030"/><rect x="376" y="344" width="1" height="19" fill="#303030"/><rect x="378" y="344" width="1" height="19" fill="#303030"/><rect x="380" y="344" width="1" height="19" fill="#303030"/><rect x="382" y="344" width="1" height="19" fill="#303030"/><rect x="384" y="344" width="1" height="19" fill="#303030"/><rect x="386" y="344" width="1" height="19" fill="#303030"/><rect x="388" y="344" width="1" height="19" fill="#303030"/><rect x="390" y="344" width="1" height="19" fill="#303030"/><rect x="392" y="344" width="1" height="19" fill="#303030"/><rect x="394" y="344" width="1" height="19" fill="#303030"/><rect x="396" y="344" width="1" height="19" fill="#303030"/><rect x="398" y="344" width="1" height="19" fill="#303030"/><rect x="400" y="344" width="1" height="19" fill="#303030"/><rect x="402" y="344" width="1" height="19" fill="#303030"/><rect x="404" y="344" width="1" height="19" fill="#303030"/><rect x="406" y="344" width="1" height="19" fill="#303030"/><rect x="408" y="344" width="1" height="19" fill="#303030"/><rect x="410" y="344" width="1" height="19" fill="#303030"/><rect x="412" y="344" width="1" height="19" fill="#303030"/><rect x="414" y="344" width="1" height="19" fill="#303030"/><rect x="416" y="344" width="1" height="19" fill="#303030"/><rect x="418" y="344" width="1" height="19" fill="#303030"/><rect x="420" y="344" width="1" height="19" fill="#303030"/><rect x="422" y="344" width="1" height="19" fill="#303030"/><rect x="424" y="344" width="1" height="19" fill="#303030"/><rect x="426" y="344" width="1" height="19" fill="#303030"/><rect x="428" y="344" width="1" height="19" fill="#303030"/><rect x="430" y="344" width="1" height="19" fill="#303030"/><rect x="432" y="344" width="1" height="19" fill="#303030"/><rect x="434" y="344" width="1" height="19" fill="#303030"/><rect x="436" y="344" width="1" height="19" fill="#303030"/><rect x="438" y="344" width="1" height="19" fill="#303030"/><rect x="440" y="344" width="1" height="19" fill="#303030"/><rect x="442" y="344" width="1" height="19" fill="#303030"/><rect x="444" y="344" width="1" height="19" fill="#303030"/><rect x="446" y="344" width="1" height="19" fill="#303030"/><rect x="448" y="344" width="1" height="19" fill="#303030"/><rect x="450" y="344" width="1" height="19" fill="#303030"/><rect x="452" y="344" width="1" height="19" fill="#303030"/><rect x="454" y="344" width="1" height="19" fill="#303030"/><rect x="456" y="344" width="1" height="19" fill="#303030"/><rect x="458" y="344" width="1" height="19" fill="#303030"/><rect x="460" y="344" width="1" height="19" fill="#303030"/><rect x="462" y="344" width="1" height="19" fill="#303030"/><rect x="464" y="344" width="1" height="19" fill="#303030"/><rect x="466" y="344" width="1" height="19" fill="#303030"/><rect x="468" y="344" width="1" height="19" fill="#303030"/><rect x="470" y="344" width="1" height="19" fill="#303030"/><rect x="472" y="344" width="1" height="19" fill="#303030"/><rect x="474" y="344" width="1" height="19" fill="#303030"/><rect x="476" y="344" width="1" height="19" fill="#303030"/><rect x="478" y="344" width="1" height="19" fill="#303030"/><rect x="480" y="344" width="1" height="19" fill="#303030"/><rect x="482" y="344" width="1" height="19" fill="#303030"/><rect x="484" y="344" width="1" height="19" fill="#303030"/><rect x="486" y="344" width="1" height="19" fill="#303030"/><rect x="488" y="344" width="1" height="19" fill="#303030"/><rect x="490" y="344" width="1" height="19" fill="#303030"/><rect x="492" y="344" width="1" height="19" fill="#303030"/><rect x="494" y="344" width="1" height="19" fill="#303030"/><rect x="496" y="344" width="1" height="19" fill="#303030"/><rect x="498" y="344" width="1" height="19" fill="#303030"/><rect x="500" y="344" width="1" height="19" fill="#303030"/><rect x="502" y="344" width="1" height="19" fill="#303030"/><rect x="504" y="344" width="1" height="19" fill="#303030"/><rect x="506" y="344" width="1" height="19" fill="#303030"/><rect x="508" y="344" width="1" height="19" fill="#303030"/><rect x="510" y="344" width="1" height="19" fill="#303030"/><rect x="512" y="344" width="1" height="19" fill="#303030"/><rect x="514" y="344" width="1" height="19" fill="#303030"/><rect x="516" y="344" width="1" height="19" fill="#303030"/><rect x="518" y="344" width="1" height="19" fill="#303030"/><rect x="520" y="344" width="1" height="19" fill="#303030"/><rect x="522" y="344" width="1" height="19" fill="#303030"/><rect x="524" y="344" width="1" height="19" fill="#303030"/><rect x="526" y="344" width="1" height="19" fill="#303030"/><rect x="528" y="344" width="1" height="19" fill="#303030"/><rect x="530" y="344" width="1" height="19" fill="#303030"/><rect x="532" y="344" width="1" height="19" fill="#303030"/><rect x="534" y="344" width="1" height="19" fill="#303030"/><rect x="536" y="344" width="1" height="19" fill="#303030"/><rect x="538" y="344" width="1" height="19" fill="#303030"/><rect x="540" y="344" width="1" height="19" fill="#303030"/><rect x="542" y="344" width="1" height="19" fill="#303030"/><rect x="544" y="344" width="1" height="19" fill="#303030"/><rect x="546" y="344" width="1" height="19" fill="#303030"/><rect x="548" y="344" width="1" height="19" fill="#303030"/><rect x="550" y="344" width="1" height="19" fill="#303030"/><rect x="552" y="344" width="1" height="19" fill="#303030"/><rect x="554" y="344" width="1" height="19" fill="#303030"/><rect x="556" y="344" width="1" height="19" fill="#303030"/><rect x="558" y="344" width="1" height="19" fill="#303030"/><rect x="560" y="344" width="1" height="19" fill="#303030"/><rect x="562" y="344" width="1" height="19" fill="#303030"/><rect x="564" y="344" width="1" height="19" fill="#303030"/><rect x="566" y="344" width="1" height="19" fill="#303030"/><rect x="568" y="344" width="1" height="19" fill="#303030"/><rect x="570" y="344" width="1" height="19" fill="#303030"/><rect x="572" y="344" width="1" height="19" fill="#303030"/><rect x="574" y="344" width="1" height="19" fill="#303030"/><rect x="576" y="344" width="1" height="19" fill="#303030"/><rect x="578" y="344" width="1" height="19" fill="#303030"/><rect x="580" y="344" width="1" height="19" fill="#303030"/><rect x="582" y="344" width="1" height="19" fill="#303030"/><rect x="584" y="344" width="1" height="19" fill="#303030"/><rect x="586" y="344" width="1" height="19" fill="#303030"/><rect x="588" y="344" width="1" height="19" fill="#303030"/><rect x="590" y="344" width="1" height="19" fill="#303030"/><rect x="592" y="344" width="1" height="19" fill="#303030"/><rect x="594" y="344" width="1" height="19" fill="#303030"/><rect x="596" y="344" width="1" height="19" fill="#303030"/><rect x="598" y="344" width="1" height="19" fill="#303030"/><rect x="600" y="344" width="1" height="19" fill="#303030"/><rect x="602" y="344" width="1" height="19" fill="#303030"/><rect x="604" y="344" width="1" height="19" fill="#303030"/><rect x="606" y="344" width="1" height="19" fill="#303030"/><rect x="608" y="344" width="1" height="19" fill="#303030"/><rect x="610" y="344" width="1" height="19" fill="#303030"/><rect x="612" y="344" width="1" height="19" fill="#303030"/><rect x="614" y="344" width="1" height="19" fill="#303030"/><rect x="616" y="344" width="1" height="19" fill="#303030"/><rect x="618" y="344" width="1" height="19" fill="#303030"/><rect x="620" y="344" width="1" height="19" fill="#303030"/><rect x="622" y="344" width="1" height="19" fill="#303030"/><rect x="624" y="344" width="1" height="19" fill="#303030"/><rect x="626" y="344" width="1" height="19" fill="#303030"/><rect x="628" y="344" width="1" height="19" fill="#303030"/><rect x="630" y="344" width="1" height="19" fill="#303030"/><rect x="632" y="344" width="1" height="19" fill="#303030"/><rect x="634" y="344" width="1" height="19" fill="#303030"/><rect x="636" y="344" width="1" height="19" fill="#303030"/><rect x="638" y="344" width="1" height="19" fill="#303030"/><rect x="640" y="344" width="1" height="19" fill="#303030"/><rect x="642" y="344" width="1" height="19" fill="#303030"/><rect x="644" y="344" width="1" height="19" fill="#303030"/><rect x="646" y="344" width="1" height="19" fill="#303030"/><rect x="648" y="344" width="1" height="19" fill="#303030"/><rect x="343" y="346" width="1" height="14" fill="#B8B8B8"/><rect x="344" y="346" width="1" height="14" fill="#808080"/><rect x="354" y="348" width="1" height="14" fill="#B8B8B8"/><rect x="355" y="348" width="1" height="14" fill="#808080"/><rect x="365" y="346" width="1" height="14" fill="#B8B8B8"/><rect x="366" y="346" width="1" height="14" fill="#808080"/><rect x="376" y="348" width="1" height="14" fill="#B8B8B8"/><rect x="377" y="348" width="1" height="14" fill="#808080"/><rect x="387" y="346" width="1" height="14" fill="#B8B8B8"/><rect x="388" y="346" width="1" height="14" fill="#808080"/><rect x="398" y="348" width="1" height="14" fill="#B8B8B8"/><rect x="399" y="348" width="1" height="14" fill="#808080"/><rect x="409" y="346" width="1" height="14" fill="#B8B8B8"/><rect x="410" y="346" width="1" height="14" fill="#808080"/><rect x="420" y="348" width="1" height="14" fill="#B8B8B8"/><rect x="421" y="348" width="1" height="14" fill="#808080"/><rect x="431" y="346" width="1" height="14" fill="#B8B8B8"/><rect x="432" y="346" width="1" height="14" fill="#808080"/><rect x="442" y="348" width="1" height="14" fill="#B8B8B8"/><rect x="443" y="348" width="1" height="14" fill="#808080"/><rect x="453" y="346" width="1" height="14" fill="#B8B8B8"/><rect x="454" y="346" width="1" height="14" fill="#808080"/><rect x="464" y="348" width="1" height="14" fill="#B8B8B8"/><rect x="465" y="348" width="1" height="14" fill="#808080"/><rect x="475" y="346" width="1" height="14" fill="#B8B8B8"/><rect x="476" y="346" width="1" height="14" fill="#808080"/><rect x="486" y="348" width="1" height="14" fill="#B8B8B8"/><rect x="487" y="348" width="1" height="14" fill="#808080"/><rect x="497" y="346" width="1" height="14" fill="#B8B8B8"/><rect x="498" y="346" width="1" height="14" fill="#808080"/><rect x="508" y="348" width="1" height="14" fill="#B8B8B8"/><rect x="509" y="348" width="1" height="14" fill="#808080"/><rect x="519" y="346" width="1" height="14" fill="#B8B8B8"/><rect x="520" y="346" width="1" height="14" fill="#808080"/><rect x="530" y="348" width="1" height="14" fill="#B8B8B8"/><rect x="531" y="348" width="1" height="14" fill="#808080"/><rect x="541" y="346" width="1" height="14" fill="#B8B8B8"/><rect x="542" y="346" width="1" height="14" fill="#808080"/><rect x="552" y="348" width="1" height="14" fill="#B8B8B8"/><rect x="553" y="348" width="1" height="14" fill="#808080"/><rect x="563" y="346" width="1" height="14" fill="#B8B8B8"/><rect x="564" y="346" width="1" height="14" fill="#808080"/><rect x="574" y="348" width="1" height="14" fill="#B8B8B8"/><rect x="575" y="348" width="1" height="14" fill="#808080"/><rect x="585" y="346" width="1" height="14" fill="#B8B8B8"/><rect x="586" y="346" width="1" height="14" fill="#808080"/><rect x="596" y="348" width="1" height="14" fill="#B8B8B8"/><rect x="597" y="348" width="1" height="14" fill="#808080"/><rect x="607" y="346" width="1" height="14" fill="#B8B8B8"/><rect x="608" y="346" width="1" height="14" fill="#808080"/><rect x="618" y="348" width="1" height="14" fill="#B8B8B8"/><rect x="619" y="348" width="1" height="14" fill="#808080"/><rect x="629" y="346" width="1" height="14" fill="#B8B8B8"/><rect x="630" y="346" width="1" height="14" fill="#808080"/><rect x="640" y="348" width="1" height="14" fill="#B8B8B8"/><rect x="641" y="348" width="1" height="14" fill="#808080"/><rect x="649" y="346" width="2" height="15" fill="#A6A6A6"/><rect x="188" y="385" width="147" height="2" fill="#4A4A4A"/><rect x="649" y="385" width="205" height="2" fill="#4A4A4A"/><rect x="335" y="368" width="314" height="19" fill="#3B3B3B"/><rect x="335" y="368" width="1" height="19" fill="#505050"/><rect x="339" y="368" width="1" height="19" fill="#282828"/><rect x="344" y="368" width="1" height="19" fill="#282828"/><rect x="349" y="368" width="1" height="19" fill="#282828"/><rect x="354" y="368" width="1" height="19" fill="#282828"/><rect x="357" y="368" width="1" height="19" fill="#282828"/><rect x="362" y="368" width="1" height="19" fill="#282828"/><rect x="367" y="368" width="1" height="19" fill="#282828"/><rect x="372" y="368" width="1" height="19" fill="#282828"/><rect x="375" y="368" width="1" height="19" fill="#282828"/><rect x="380" y="368" width="1" height="19" fill="#282828"/><rect x="385" y="368" width="1" height="19" fill="#282828"/><rect x="390" y="368" width="1" height="19" fill="#282828"/><rect x="393" y="368" width="1" height="19" fill="#282828"/><rect x="398" y="368" width="1" height="19" fill="#282828"/><rect x="403" y="368" width="1" height="19" fill="#282828"/><rect x="408" y="368" width="1" height="19" fill="#282828"/><rect x="411" y="368" width="1" height="19" fill="#282828"/><rect x="416" y="368" width="1" height="19" fill="#282828"/><rect x="421" y="368" width="1" height="19" fill="#282828"/><rect x="426" y="368" width="1" height="19" fill="#282828"/><rect x="429" y="368" width="1" height="19" fill="#282828"/><rect x="434" y="368" width="1" height="19" fill="#282828"/><rect x="439" y="368" width="1" height="19" fill="#282828"/><rect x="444" y="368" width="1" height="19" fill="#282828"/><rect x="447" y="368" width="1" height="19" fill="#282828"/><rect x="452" y="368" width="1" height="19" fill="#282828"/><rect x="457" y="368" width="1" height="19" fill="#282828"/><rect x="462" y="368" width="1" height="19" fill="#282828"/><rect x="465" y="368" width="1" height="19" fill="#282828"/><rect x="470" y="368" width="1" height="19" fill="#282828"/><rect x="475" y="368" width="1" height="19" fill="#282828"/><rect x="480" y="368" width="1" height="19" fill="#282828"/><rect x="483" y="368" width="1" height="19" fill="#282828"/><rect x="488" y="368" width="1" height="19" fill="#282828"/><rect x="493" y="368" width="1" height="19" fill="#282828"/><rect x="498" y="368" width="1" height="19" fill="#282828"/><rect x="501" y="368" width="1" height="19" fill="#282828"/><rect x="506" y="368" width="1" height="19" fill="#282828"/><rect x="511" y="368" width="1" height="19" fill="#282828"/><rect x="516" y="368" width="1" height="19" fill="#282828"/><rect x="519" y="368" width="1" height="19" fill="#282828"/><rect x="524" y="368" width="1" height="19" fill="#282828"/><rect x="529" y="368" width="1" height="19" fill="#282828"/><rect x="534" y="368" width="1" height="19" fill="#282828"/><rect x="537" y="368" width="1" height="19" fill="#282828"/><rect x="542" y="368" width="1" height="19" fill="#282828"/><rect x="547" y="368" width="1" height="19" fill="#282828"/><rect x="552" y="368" width="1" height="19" fill="#282828"/><rect x="555" y="368" width="1" height="19" fill="#282828"/><rect x="560" y="368" width="1" height="19" fill="#282828"/><rect x="565" y="368" width="1" height="19" fill="#282828"/><rect x="570" y="368" width="1" height="19" fill="#282828"/><rect x="573" y="368" width="1" height="19" fill="#282828"/><rect x="578" y="368" width="1" height="19" fill="#282828"/><rect x="583" y="368" width="1" height="19" fill="#282828"/><rect x="588" y="368" width="1" height="19" fill="#282828"/><rect x="591" y="368" width="1" height="19" fill="#282828"/><rect x="596" y="368" width="1" height="19" fill="#282828"/><rect x="601" y="368" width="1" height="19" fill="#282828"/><rect x="606" y="368" width="1" height="19" fill="#282828"/><rect x="609" y="368" width="1" height="19" fill="#282828"/><rect x="614" y="368" width="1" height="19" fill="#282828"/><rect x="619" y="368" width="1" height="19" fill="#282828"/><rect x="624" y="368" width="1" height="19" fill="#282828"/><rect x="627" y="368" width="1" height="19" fill="#282828"/><rect x="632" y="368" width="1" height="19" fill="#282828"/><rect x="637" y="368" width="1" height="19" fill="#282828"/><rect x="642" y="368" width="1" height="19" fill="#282828"/><rect x="645" y="368" width="1" height="19" fill="#282828"/><rect x="649" y="369" width="2" height="16" fill="#A8A8A8"/><rect x="188" y="409" width="147" height="2" fill="#4A4A4A"/><rect x="649" y="409" width="205" height="2" fill="#4A4A4A"/><rect x="335" y="392" width="314" height="19" fill="#3B3B3B"/><rect x="335" y="392" width="1" height="19" fill="#505050"/><rect x="339" y="392" width="1" height="19" fill="#282828"/><rect x="342" y="392" width="1" height="19" fill="#282828"/><rect x="347" y="392" width="1" height="19" fill="#282828"/><rect x="352" y="392" width="1" height="19" fill="#282828"/><rect x="357" y="392" width="1" height="19" fill="#282828"/><rect x="360" y="392" width="1" height="19" fill="#282828"/><rect x="365" y="392" width="1" height="19" fill="#282828"/><rect x="370" y="392" width="1" height="19" fill="#282828"/><rect x="375" y="392" width="1" height="19" fill="#282828"/><rect x="378" y="392" width="1" height="19" fill="#282828"/><rect x="383" y="392" width="1" height="19" fill="#282828"/><rect x="388" y="392" width="1" height="19" fill="#282828"/><rect x="393" y="392" width="1" height="19" fill="#282828"/><rect x="396" y="392" width="1" height="19" fill="#282828"/><rect x="401" y="392" width="1" height="19" fill="#282828"/><rect x="406" y="392" width="1" height="19" fill="#282828"/><rect x="411" y="392" width="1" height="19" fill="#282828"/><rect x="414" y="392" width="1" height="19" fill="#282828"/><rect x="419" y="392" width="1" height="19" fill="#282828"/><rect x="424" y="392" width="1" height="19" fill="#282828"/><rect x="429" y="392" width="1" height="19" fill="#282828"/><rect x="432" y="392" width="1" height="19" fill="#282828"/><rect x="437" y="392" width="1" height="19" fill="#282828"/><rect x="442" y="392" width="1" height="19" fill="#282828"/><rect x="447" y="392" width="1" height="19" fill="#282828"/><rect x="450" y="392" width="1" height="19" fill="#282828"/><rect x="455" y="392" width="1" height="19" fill="#282828"/><rect x="460" y="392" width="1" height="19" fill="#282828"/><rect x="465" y="392" width="1" height="19" fill="#282828"/><rect x="468" y="392" width="1" height="19" fill="#282828"/><rect x="473" y="392" width="1" height="19" fill="#282828"/><rect x="478" y="392" width="1" height="19" fill="#282828"/><rect x="483" y="392" width="1" height="19" fill="#282828"/><rect x="486" y="392" width="1" height="19" fill="#282828"/><rect x="491" y="392" width="1" height="19" fill="#282828"/><rect x="496" y="392" width="1" height="19" fill="#282828"/><rect x="501" y="392" width="1" height="19" fill="#282828"/><rect x="504" y="392" width="1" height="19" fill="#282828"/><rect x="509" y="392" width="1" height="19" fill="#282828"/><rect x="514" y="392" width="1" height="19" fill="#282828"/><rect x="519" y="392" width="1" height="19" fill="#282828"/><rect x="522" y="392" width="1" height="19" fill="#282828"/><rect x="527" y="392" width="1" height="19" fill="#282828"/><rect x="532" y="392" width="1" height="19" fill="#282828"/><rect x="537" y="392" width="1" height="19" fill="#282828"/><rect x="540" y="392" width="1" height="19" fill="#282828"/><rect x="545" y="392" width="1" height="19" fill="#282828"/><rect x="550" y="392" width="1" height="19" fill="#282828"/><rect x="555" y="392" width="1" height="19" fill="#282828"/><rect x="558" y="392" width="1" height="19" fill="#282828"/><rect x="563" y="392" width="1" height="19" fill="#282828"/><rect x="568" y="392" width="1" height="19" fill="#282828"/><rect x="573" y="392" width="1" height="19" fill="#282828"/><rect x="576" y="392" width="1" height="19" fill="#282828"/><rect x="581" y="392" width="1" height="19" fill="#282828"/><rect x="586" y="392" width="1" height="19" fill="#282828"/><rect x="591" y="392" width="1" height="19" fill="#282828"/><rect x="594" y="392" width="1" height="19" fill="#282828"/><rect x="599" y="392" width="1" height="19" fill="#282828"/><rect x="604" y="392" width="1" height="19" fill="#282828"/><rect x="609" y="392" width="1" height="19" fill="#282828"/><rect x="612" y="392" width="1" height="19" fill="#282828"/><rect x="617" y="392" width="1" height="19" fill="#282828"/><rect x="622" y="392" width="1" height="19" fill="#282828"/><rect x="627" y="392" width="1" height="19" fill="#282828"/><rect x="630" y="392" width="1" height="19" fill="#282828"/><rect x="635" y="392" width="1" height="19" fill="#282828"/><rect x="640" y="392" width="1" height="19" fill="#282828"/><rect x="645" y="392" width="1" height="19" fill="#282828"/><rect x="649" y="393" width="2" height="16" fill="#A8A8A8"/><rect x="188" y="433" width="147" height="2" fill="#4A4A4A"/><rect x="649" y="433" width="205" height="2" fill="#4A4A4A"/><rect x="335" y="416" width="314" height="19" fill="#3B3B3B"/><rect x="335" y="416" width="1" height="19" fill="#505050"/><rect x="339" y="416" width="1" height="19" fill="#282828"/><rect x="344" y="416" width="1" height="19" fill="#282828"/><rect x="347" y="416" width="1" height="19" fill="#282828"/><rect x="352" y="416" width="1" height="19" fill="#282828"/><rect x="357" y="416" width="1" height="19" fill="#282828"/><rect x="362" y="416" width="1" height="19" fill="#282828"/><rect x="365" y="416" width="1" height="19" fill="#282828"/><rect x="370" y="416" width="1" height="19" fill="#282828"/><rect x="375" y="416" width="1" height="19" fill="#282828"/><rect x="380" y="416" width="1" height="19" fill="#282828"/><rect x="383" y="416" width="1" height="19" fill="#282828"/><rect x="388" y="416" width="1" height="19" fill="#282828"/><rect x="393" y="416" width="1" height="19" fill="#282828"/><rect x="398" y="416" width="1" height="19" fill="#282828"/><rect x="401" y="416" width="1" height="19" fill="#282828"/><rect x="406" y="416" width="1" height="19" fill="#282828"/><rect x="411" y="416" width="1" height="19" fill="#282828"/><rect x="416" y="416" width="1" height="19" fill="#282828"/><rect x="419" y="416" width="1" height="19" fill="#282828"/><rect x="424" y="416" width="1" height="19" fill="#282828"/><rect x="429" y="416" width="1" height="19" fill="#282828"/><rect x="434" y="416" width="1" height="19" fill="#282828"/><rect x="437" y="416" width="1" height="19" fill="#282828"/><rect x="442" y="416" width="1" height="19" fill="#282828"/><rect x="447" y="416" width="1" height="19" fill="#282828"/><rect x="452" y="416" width="1" height="19" fill="#282828"/><rect x="455" y="416" width="1" height="19" fill="#282828"/><rect x="460" y="416" width="1" height="19" fill="#282828"/><rect x="465" y="416" width="1" height="19" fill="#282828"/><rect x="470" y="416" width="1" height="19" fill="#282828"/><rect x="473" y="416" width="1" height="19" fill="#282828"/><rect x="478" y="416" width="1" height="19" fill="#282828"/><rect x="483" y="416" width="1" height="19" fill="#282828"/><rect x="488" y="416" width="1" height="19" fill="#282828"/><rect x="491" y="416" width="1" height="19" fill="#282828"/><rect x="496" y="416" width="1" height="19" fill="#282828"/><rect x="501" y="416" width="1" height="19" fill="#282828"/><rect x="506" y="416" width="1" height="19" fill="#282828"/><rect x="509" y="416" width="1" height="19" fill="#282828"/><rect x="514" y="416" width="1" height="19" fill="#282828"/><rect x="519" y="416" width="1" height="19" fill="#282828"/><rect x="524" y="416" width="1" height="19" fill="#282828"/><rect x="527" y="416" width="1" height="19" fill="#282828"/><rect x="532" y="416" width="1" height="19" fill="#282828"/><rect x="537" y="416" width="1" height="19" fill="#282828"/><rect x="542" y="416" width="1" height="19" fill="#282828"/><rect x="545" y="416" width="1" height="19" fill="#282828"/><rect x="550" y="416" width="1" height="19" fill="#282828"/><rect x="555" y="416" width="1" height="19" fill="#282828"/><rect x="560" y="416" width="1" height="19" fill="#282828"/><rect x="563" y="416" width="1" height="19" fill="#282828"/><rect x="568" y="416" width="1" height="19" fill="#282828"/><rect x="573" y="416" width="1" height="19" fill="#282828"/><rect x="578" y="416" width="1" height="19" fill="#282828"/><rect x="581" y="416" width="1" height="19" fill="#282828"/><rect x="586" y="416" width="1" height="19" fill="#282828"/><rect x="591" y="416" width="1" height="19" fill="#282828"/><rect x="596" y="416" width="1" height="19" fill="#282828"/><rect x="599" y="416" width="1" height="19" fill="#282828"/><rect x="604" y="416" width="1" height="19" fill="#282828"/><rect x="609" y="416" width="1" height="19" fill="#282828"/><rect x="614" y="416" width="1" height="19" fill="#282828"/><rect x="617" y="416" width="1" height="19" fill="#282828"/><rect x="622" y="416" width="1" height="19" fill="#282828"/><rect x="627" y="416" width="1" height="19" fill="#282828"/><rect x="632" y="416" width="1" height="19" fill="#282828"/><rect x="635" y="416" width="1" height="19" fill="#282828"/><rect x="640" y="416" width="1" height="19" fill="#282828"/><rect x="645" y="416" width="1" height="19" fill="#282828"/><rect x="649" y="417" width="2" height="16" fill="#A8A8A8"/><rect x="188" y="457" width="147" height="2" fill="#4A4A4A"/><rect x="649" y="457" width="205" height="2" fill="#4A4A4A"/><rect x="335" y="440" width="314" height="19" fill="#3B3B3B"/><rect x="335" y="440" width="1" height="19" fill="#505050"/><rect x="339" y="440" width="1" height="19" fill="#282828"/><rect x="344" y="440" width="1" height="19" fill="#282828"/><rect x="349" y="440" width="1" height="19" fill="#282828"/><rect x="352" y="440" width="1" height="19" fill="#282828"/><rect x="357" y="440" width="1" height="19" fill="#282828"/><rect x="362" y="440" width="1" height="19" fill="#282828"/><rect x="367" y="440" width="1" height="19" fill="#282828"/><rect x="370" y="440" width="1" height="19" fill="#282828"/><rect x="375" y="440" width="1" height="19" fill="#282828"/><rect x="380" y="440" width="1" height="19" fill="#282828"/><rect x="385" y="440" width="1" height="19" fill="#282828"/><rect x="388" y="440" width="1" height="19" fill="#282828"/><rect x="393" y="440" width="1" height="19" fill="#282828"/><rect x="398" y="440" width="1" height="19" fill="#282828"/><rect x="403" y="440" width="1" height="19" fill="#282828"/><rect x="406" y="440" width="1" height="19" fill="#282828"/><rect x="411" y="440" width="1" height="19" fill="#282828"/><rect x="416" y="440" width="1" height="19" fill="#282828"/><rect x="421" y="440" width="1" height="19" fill="#282828"/><rect x="424" y="440" width="1" height="19" fill="#282828"/><rect x="429" y="440" width="1" height="19" fill="#282828"/><rect x="434" y="440" width="1" height="19" fill="#282828"/><rect x="439" y="440" width="1" height="19" fill="#282828"/><rect x="442" y="440" width="1" height="19" fill="#282828"/><rect x="447" y="440" width="1" height="19" fill="#282828"/><rect x="452" y="440" width="1" height="19" fill="#282828"/><rect x="457" y="440" width="1" height="19" fill="#282828"/><rect x="460" y="440" width="1" height="19" fill="#282828"/><rect x="465" y="440" width="1" height="19" fill="#282828"/><rect x="470" y="440" width="1" height="19" fill="#282828"/><rect x="475" y="440" width="1" height="19" fill="#282828"/><rect x="478" y="440" width="1" height="19" fill="#282828"/><rect x="483" y="440" width="1" height="19" fill="#282828"/><rect x="488" y="440" width="1" height="19" fill="#282828"/><rect x="493" y="440" width="1" height="19" fill="#282828"/><rect x="496" y="440" width="1" height="19" fill="#282828"/><rect x="501" y="440" width="1" height="19" fill="#282828"/><rect x="506" y="440" width="1" height="19" fill="#282828"/><rect x="511" y="440" width="1" height="19" fill="#282828"/><rect x="514" y="440" width="1" height="19" fill="#282828"/><rect x="519" y="440" width="1" height="19" fill="#282828"/><rect x="524" y="440" width="1" height="19" fill="#282828"/><rect x="529" y="440" width="1" height="19" fill="#282828"/><rect x="532" y="440" width="1" height="19" fill="#282828"/><rect x="537" y="440" width="1" height="19" fill="#282828"/><rect x="542" y="440" width="1" height="19" fill="#282828"/><rect x="547" y="440" width="1" height="19" fill="#282828"/><rect x="550" y="440" width="1" height="19" fill="#282828"/><rect x="555" y="440" width="1" height="19" fill="#282828"/><rect x="560" y="440" width="1" height="19" fill="#282828"/><rect x="565" y="440" width="1" height="19" fill="#282828"/><rect x="568" y="440" width="1" height="19" fill="#282828"/><rect x="573" y="440" width="1" height="19" fill="#282828"/><rect x="578" y="440" width="1" height="19" fill="#282828"/><rect x="583" y="440" width="1" height="19" fill="#282828"/><rect x="586" y="440" width="1" height="19" fill="#282828"/><rect x="591" y="440" width="1" height="19" fill="#282828"/><rect x="596" y="440" width="1" height="19" fill="#282828"/><rect x="601" y="440" width="1" height="19" fill="#282828"/><rect x="604" y="440" width="1" height="19" fill="#282828"/><rect x="609" y="440" width="1" height="19" fill="#282828"/><rect x="614" y="440" width="1" height="19" fill="#282828"/><rect x="619" y="440" width="1" height="19" fill="#282828"/><rect x="622" y="440" width="1" height="19" fill="#282828"/><rect x="627" y="440" width="1" height="19" fill="#282828"/><rect x="632" y="440" width="1" height="19" fill="#282828"/><rect x="637" y="440" width="1" height="19" fill="#282828"/><rect x="640" y="440" width="1" height="19" fill="#282828"/><rect x="645" y="440" width="1" height="19" fill="#282828"/><rect x="649" y="441" width="2" height="16" fill="#A8A8A8"/><rect x="188" y="481" width="147" height="2" fill="#4A4A4A"/><rect x="649" y="481" width="205" height="2" fill="#4A4A4A"/><rect x="335" y="464" width="314" height="19" fill="#3B3B3B"/><rect x="335" y="464" width="1" height="19" fill="#505050"/><rect x="339" y="464" width="1" height="19" fill="#282828"/><rect x="344" y="464" width="1" height="19" fill="#282828"/><rect x="349" y="464" width="1" height="19" fill="#282828"/><rect x="354" y="464" width="1" height="19" fill="#282828"/><rect x="357" y="464" width="1" height="19" fill="#282828"/><rect x="362" y="464" width="1" height="19" fill="#282828"/><rect x="367" y="464" width="1" height="19" fill="#282828"/><rect x="372" y="464" width="1" height="19" fill="#282828"/><rect x="375" y="464" width="1" height="19" fill="#282828"/><rect x="380" y="464" width="1" height="19" fill="#282828"/><rect x="385" y="464" width="1" height="19" fill="#282828"/><rect x="390" y="464" width="1" height="19" fill="#282828"/><rect x="393" y="464" width="1" height="19" fill="#282828"/><rect x="398" y="464" width="1" height="19" fill="#282828"/><rect x="403" y="464" width="1" height="19" fill="#282828"/><rect x="408" y="464" width="1" height="19" fill="#282828"/><rect x="411" y="464" width="1" height="19" fill="#282828"/><rect x="416" y="464" width="1" height="19" fill="#282828"/><rect x="421" y="464" width="1" height="19" fill="#282828"/><rect x="426" y="464" width="1" height="19" fill="#282828"/><rect x="429" y="464" width="1" height="19" fill="#282828"/><rect x="434" y="464" width="1" height="19" fill="#282828"/><rect x="439" y="464" width="1" height="19" fill="#282828"/><rect x="444" y="464" width="1" height="19" fill="#282828"/><rect x="447" y="464" width="1" height="19" fill="#282828"/><rect x="452" y="464" width="1" height="19" fill="#282828"/><rect x="457" y="464" width="1" height="19" fill="#282828"/><rect x="462" y="464" width="1" height="19" fill="#282828"/><rect x="465" y="464" width="1" height="19" fill="#282828"/><rect x="470" y="464" width="1" height="19" fill="#282828"/><rect x="475" y="464" width="1" height="19" fill="#282828"/><rect x="480" y="464" width="1" height="19" fill="#282828"/><rect x="483" y="464" width="1" height="19" fill="#282828"/><rect x="488" y="464" width="1" height="19" fill="#282828"/><rect x="493" y="464" width="1" height="19" fill="#282828"/><rect x="498" y="464" width="1" height="19" fill="#282828"/><rect x="501" y="464" width="1" height="19" fill="#282828"/><rect x="506" y="464" width="1" height="19" fill="#282828"/><rect x="511" y="464" width="1" height="19" fill="#282828"/><rect x="516" y="464" width="1" height="19" fill="#282828"/><rect x="519" y="464" width="1" height="19" fill="#282828"/><rect x="524" y="464" width="1" height="19" fill="#282828"/><rect x="529" y="464" width="1" height="19" fill="#282828"/><rect x="534" y="464" width="1" height="19" fill="#282828"/><rect x="537" y="464" width="1" height="19" fill="#282828"/><rect x="542" y="464" width="1" height="19" fill="#282828"/><rect x="547" y="464" width="1" height="19" fill="#282828"/><rect x="552" y="464" width="1" height="19" fill="#282828"/><rect x="555" y="464" width="1" height="19" fill="#282828"/><rect x="560" y="464" width="1" height="19" fill="#282828"/><rect x="565" y="464" width="1" height="19" fill="#282828"/><rect x="570" y="464" width="1" height="19" fill="#282828"/><rect x="573" y="464" width="1" height="19" fill="#282828"/><rect x="578" y="464" width="1" height="19" fill="#282828"/><rect x="583" y="464" width="1" height="19" fill="#282828"/><rect x="588" y="464" width="1" height="19" fill="#282828"/><rect x="591" y="464" width="1" height="19" fill="#282828"/><rect x="596" y="464" width="1" height="19" fill="#282828"/><rect x="601" y="464" width="1" height="19" fill="#282828"/><rect x="606" y="464" width="1" height="19" fill="#282828"/><rect x="609" y="464" width="1" height="19" fill="#282828"/><rect x="614" y="464" width="1" height="19" fill="#282828"/><rect x="619" y="464" width="1" height="19" fill="#282828"/><rect x="624" y="464" width="1" height="19" fill="#282828"/><rect x="627" y="464" width="1" height="19" fill="#282828"/><rect x="632" y="464" width="1" height="19" fill="#282828"/><rect x="637" y="464" width="1" height="19" fill="#282828"/><rect x="642" y="464" width="1" height="19" fill="#282828"/><rect x="645" y="464" width="1" height="19" fill="#282828"/><rect x="649" y="465" width="2" height="16" fill="#A8A8A8"/><rect x="188" y="505" width="147" height="2" fill="#4A4A4A"/><rect x="649" y="505" width="205" height="2" fill="#4A4A4A"/><rect x="335" y="488" width="314" height="19" fill="#3B3B3B"/><rect x="335" y="488" width="1" height="19" fill="#505050"/><rect x="339" y="488" width="1" height="19" fill="#282828"/><rect x="342" y="488" width="1" height="19" fill="#282828"/><rect x="347" y="488" width="1" height="19" fill="#282828"/><rect x="352" y="488" width="1" height="19" fill="#282828"/><rect x="357" y="488" width="1" height="19" fill="#282828"/><rect x="360" y="488" width="1" height="19" fill="#282828"/><rect x="365" y="488" width="1" height="19" fill="#282828"/><rect x="370" y="488" width="1" height="19" fill="#282828"/><rect x="375" y="488" width="1" height="19" fill="#282828"/><rect x="378" y="488" width="1" height="19" fill="#282828"/><rect x="383" y="488" width="1" height="19" fill="#282828"/><rect x="388" y="488" width="1" height="19" fill="#282828"/><rect x="393" y="488" width="1" height="19" fill="#282828"/><rect x="396" y="488" width="1" height="19" fill="#282828"/><rect x="401" y="488" width="1" height="19" fill="#282828"/><rect x="406" y="488" width="1" height="19" fill="#282828"/><rect x="411" y="488" width="1" height="19" fill="#282828"/><rect x="414" y="488" width="1" height="19" fill="#282828"/><rect x="419" y="488" width="1" height="19" fill="#282828"/><rect x="424" y="488" width="1" height="19" fill="#282828"/><rect x="429" y="488" width="1" height="19" fill="#282828"/><rect x="432" y="488" width="1" height="19" fill="#282828"/><rect x="437" y="488" width="1" height="19" fill="#282828"/><rect x="442" y="488" width="1" height="19" fill="#282828"/><rect x="447" y="488" width="1" height="19" fill="#282828"/><rect x="450" y="488" width="1" height="19" fill="#282828"/><rect x="455" y="488" width="1" height="19" fill="#282828"/><rect x="460" y="488" width="1" height="19" fill="#282828"/><rect x="465" y="488" width="1" height="19" fill="#282828"/><rect x="468" y="488" width="1" height="19" fill="#282828"/><rect x="473" y="488" width="1" height="19" fill="#282828"/><rect x="478" y="488" width="1" height="19" fill="#282828"/><rect x="483" y="488" width="1" height="19" fill="#282828"/><rect x="486" y="488" width="1" height="19" fill="#282828"/><rect x="491" y="488" width="1" height="19" fill="#282828"/><rect x="496" y="488" width="1" height="19" fill="#282828"/><rect x="501" y="488" width="1" height="19" fill="#282828"/><rect x="504" y="488" width="1" height="19" fill="#282828"/><rect x="509" y="488" width="1" height="19" fill="#282828"/><rect x="514" y="488" width="1" height="19" fill="#282828"/><rect x="519" y="488" width="1" height="19" fill="#282828"/><rect x="522" y="488" width="1" height="19" fill="#282828"/><rect x="527" y="488" width="1" height="19" fill="#282828"/><rect x="532" y="488" width="1" height="19" fill="#282828"/><rect x="537" y="488" width="1" height="19" fill="#282828"/><rect x="540" y="488" width="1" height="19" fill="#282828"/><rect x="545" y="488" width="1" height="19" fill="#282828"/><rect x="550" y="488" width="1" height="19" fill="#282828"/><rect x="555" y="488" width="1" height="19" fill="#282828"/><rect x="558" y="488" width="1" height="19" fill="#282828"/><rect x="563" y="488" width="1" height="19" fill="#282828"/><rect x="568" y="488" width="1" height="19" fill="#282828"/><rect x="573" y="488" width="1" height="19" fill="#282828"/><rect x="576" y="488" width="1" height="19" fill="#282828"/><rect x="581" y="488" width="1" height="19" fill="#282828"/><rect x="586" y="488" width="1" height="19" fill="#282828"/><rect x="591" y="488" width="1" height="19" fill="#282828"/><rect x="594" y="488" width="1" height="19" fill="#282828"/><rect x="599" y="488" width="1" height="19" fill="#282828"/><rect x="604" y="488" width="1" height="19" fill="#282828"/><rect x="609" y="488" width="1" height="19" fill="#282828"/><rect x="612" y="488" width="1" height="19" fill="#282828"/><rect x="617" y="488" width="1" height="19" fill="#282828"/><rect x="622" y="488" width="1" height="19" fill="#282828"/><rect x="627" y="488" width="1" height="19" fill="#282828"/><rect x="630" y="488" width="1" height="19" fill="#282828"/><rect x="635" y="488" width="1" height="19" fill="#282828"/><rect x="640" y="488" width="1" height="19" fill="#282828"/><rect x="645" y="488" width="1" height="19" fill="#282828"/><rect x="649" y="489" width="2" height="16" fill="#A8A8A8"/><rect x="188" y="529" width="147" height="2" fill="#4A4A4A"/><rect x="649" y="529" width="205" height="2" fill="#4A4A4A"/><rect x="335" y="512" width="314" height="19" fill="#3B3B3B"/><rect x="335" y="512" width="1" height="19" fill="#505050"/><rect x="339" y="512" width="1" height="19" fill="#282828"/><rect x="344" y="512" width="1" height="19" fill="#282828"/><rect x="347" y="512" width="1" height="19" fill="#282828"/><rect x="352" y="512" width="1" height="19" fill="#282828"/><rect x="357" y="512" width="1" height="19" fill="#282828"/><rect x="362" y="512" width="1" height="19" fill="#282828"/><rect x="365" y="512" width="1" height="19" fill="#282828"/><rect x="370" y="512" width="1" height="19" fill="#282828"/><rect x="375" y="512" width="1" height="19" fill="#282828"/><rect x="380" y="512" width="1" height="19" fill="#282828"/><rect x="383" y="512" width="1" height="19" fill="#282828"/><rect x="388" y="512" width="1" height="19" fill="#282828"/><rect x="393" y="512" width="1" height="19" fill="#282828"/><rect x="398" y="512" width="1" height="19" fill="#282828"/><rect x="401" y="512" width="1" height="19" fill="#282828"/><rect x="406" y="512" width="1" height="19" fill="#282828"/><rect x="411" y="512" width="1" height="19" fill="#282828"/><rect x="416" y="512" width="1" height="19" fill="#282828"/><rect x="419" y="512" width="1" height="19" fill="#282828"/><rect x="424" y="512" width="1" height="19" fill="#282828"/><rect x="429" y="512" width="1" height="19" fill="#282828"/><rect x="434" y="512" width="1" height="19" fill="#282828"/><rect x="437" y="512" width="1" height="19" fill="#282828"/><rect x="442" y="512" width="1" height="19" fill="#282828"/><rect x="447" y="512" width="1" height="19" fill="#282828"/><rect x="452" y="512" width="1" height="19" fill="#282828"/><rect x="455" y="512" width="1" height="19" fill="#282828"/><rect x="460" y="512" width="1" height="19" fill="#282828"/><rect x="465" y="512" width="1" height="19" fill="#282828"/><rect x="470" y="512" width="1" height="19" fill="#282828"/><rect x="473" y="512" width="1" height="19" fill="#282828"/><rect x="478" y="512" width="1" height="19" fill="#282828"/><rect x="483" y="512" width="1" height="19" fill="#282828"/><rect x="488" y="512" width="1" height="19" fill="#282828"/><rect x="491" y="512" width="1" height="19" fill="#282828"/><rect x="496" y="512" width="1" height="19" fill="#282828"/><rect x="501" y="512" width="1" height="19" fill="#282828"/><rect x="506" y="512" width="1" height="19" fill="#282828"/><rect x="509" y="512" width="1" height="19" fill="#282828"/><rect x="514" y="512" width="1" height="19" fill="#282828"/><rect x="519" y="512" width="1" height="19" fill="#282828"/><rect x="524" y="512" width="1" height="19" fill="#282828"/><rect x="527" y="512" width="1" height="19" fill="#282828"/><rect x="532" y="512" width="1" height="19" fill="#282828"/><rect x="537" y="512" width="1" height="19" fill="#282828"/><rect x="542" y="512" width="1" height="19" fill="#282828"/><rect x="545" y="512" width="1" height="19" fill="#282828"/><rect x="550" y="512" width="1" height="19" fill="#282828"/><rect x="555" y="512" width="1" height="19" fill="#282828"/><rect x="560" y="512" width="1" height="19" fill="#282828"/><rect x="563" y="512" width="1" height="19" fill="#282828"/><rect x="568" y="512" width="1" height="19" fill="#282828"/><rect x="573" y="512" width="1" height="19" fill="#282828"/><rect x="578" y="512" width="1" height="19" fill="#282828"/><rect x="581" y="512" width="1" height="19" fill="#282828"/><rect x="586" y="512" width="1" height="19" fill="#282828"/><rect x="591" y="512" width="1" height="19" fill="#282828"/><rect x="596" y="512" width="1" height="19" fill="#282828"/><rect x="599" y="512" width="1" height="19" fill="#282828"/><rect x="604" y="512" width="1" height="19" fill="#282828"/><rect x="609" y="512" width="1" height="19" fill="#282828"/><rect x="614" y="512" width="1" height="19" fill="#282828"/><rect x="617" y="512" width="1" height="19" fill="#282828"/><rect x="622" y="512" width="1" height="19" fill="#282828"/><rect x="627" y="512" width="1" height="19" fill="#282828"/><rect x="632" y="512" width="1" height="19" fill="#282828"/><rect x="635" y="512" width="1" height="19" fill="#282828"/><rect x="640" y="512" width="1" height="19" fill="#282828"/><rect x="645" y="512" width="1" height="19" fill="#282828"/><rect x="649" y="513" width="2" height="16" fill="#A8A8A8"/><rect x="188" y="553" width="147" height="2" fill="#4A4A4A"/><rect x="649" y="553" width="205" height="2" fill="#4A4A4A"/><rect x="335" y="536" width="314" height="19" fill="#3B3B3B"/><rect x="335" y="536" width="1" height="19" fill="#505050"/><rect x="339" y="536" width="1" height="19" fill="#282828"/><rect x="344" y="536" width="1" height="19" fill="#282828"/><rect x="349" y="536" width="1" height="19" fill="#282828"/><rect x="352" y="536" width="1" height="19" fill="#282828"/><rect x="357" y="536" width="1" height="19" fill="#282828"/><rect x="362" y="536" width="1" height="19" fill="#282828"/><rect x="367" y="536" width="1" height="19" fill="#282828"/><rect x="370" y="536" width="1" height="19" fill="#282828"/><rect x="375" y="536" width="1" height="19" fill="#282828"/><rect x="380" y="536" width="1" height="19" fill="#282828"/><rect x="385" y="536" width="1" height="19" fill="#282828"/><rect x="388" y="536" width="1" height="19" fill="#282828"/><rect x="393" y="536" width="1" height="19" fill="#282828"/><rect x="398" y="536" width="1" height="19" fill="#282828"/><rect x="403" y="536" width="1" height="19" fill="#282828"/><rect x="406" y="536" width="1" height="19" fill="#282828"/><rect x="411" y="536" width="1" height="19" fill="#282828"/><rect x="416" y="536" width="1" height="19" fill="#282828"/><rect x="421" y="536" width="1" height="19" fill="#282828"/><rect x="424" y="536" width="1" height="19" fill="#282828"/><rect x="429" y="536" width="1" height="19" fill="#282828"/><rect x="434" y="536" width="1" height="19" fill="#282828"/><rect x="439" y="536" width="1" height="19" fill="#282828"/><rect x="442" y="536" width="1" height="19" fill="#282828"/><rect x="447" y="536" width="1" height="19" fill="#282828"/><rect x="452" y="536" width="1" height="19" fill="#282828"/><rect x="457" y="536" width="1" height="19" fill="#282828"/><rect x="460" y="536" width="1" height="19" fill="#282828"/><rect x="465" y="536" width="1" height="19" fill="#282828"/><rect x="470" y="536" width="1" height="19" fill="#282828"/><rect x="475" y="536" width="1" height="19" fill="#282828"/><rect x="478" y="536" width="1" height="19" fill="#282828"/><rect x="483" y="536" width="1" height="19" fill="#282828"/><rect x="488" y="536" width="1" height="19" fill="#282828"/><rect x="493" y="536" width="1" height="19" fill="#282828"/><rect x="496" y="536" width="1" height="19" fill="#282828"/><rect x="501" y="536" width="1" height="19" fill="#282828"/><rect x="506" y="536" width="1" height="19" fill="#282828"/><rect x="511" y="536" width="1" height="19" fill="#282828"/><rect x="514" y="536" width="1" height="19" fill="#282828"/><rect x="519" y="536" width="1" height="19" fill="#282828"/><rect x="524" y="536" width="1" height="19" fill="#282828"/><rect x="529" y="536" width="1" height="19" fill="#282828"/><rect x="532" y="536" width="1" height="19" fill="#282828"/><rect x="537" y="536" width="1" height="19" fill="#282828"/><rect x="542" y="536" width="1" height="19" fill="#282828"/><rect x="547" y="536" width="1" height="19" fill="#282828"/><rect x="550" y="536" width="1" height="19" fill="#282828"/><rect x="555" y="536" width="1" height="19" fill="#282828"/><rect x="560" y="536" width="1" height="19" fill="#282828"/><rect x="565" y="536" width="1" height="19" fill="#282828"/><rect x="568" y="536" width="1" height="19" fill="#282828"/><rect x="573" y="536" width="1" height="19" fill="#282828"/><rect x="578" y="536" width="1" height="19" fill="#282828"/><rect x="583" y="536" width="1" height="19" fill="#282828"/><rect x="586" y="536" width="1" height="19" fill="#282828"/><rect x="591" y="536" width="1" height="19" fill="#282828"/><rect x="596" y="536" width="1" height="19" fill="#282828"/><rect x="601" y="536" width="1" height="19" fill="#282828"/><rect x="604" y="536" width="1" height="19" fill="#282828"/><rect x="609" y="536" width="1" height="19" fill="#282828"/><rect x="614" y="536" width="1" height="19" fill="#282828"/><rect x="619" y="536" width="1" height="19" fill="#282828"/><rect x="622" y="536" width="1" height="19" fill="#282828"/><rect x="627" y="536" width="1" height="19" fill="#282828"/><rect x="632" y="536" width="1" height="19" fill="#282828"/><rect x="637" y="536" width="1" height="19" fill="#282828"/><rect x="640" y="536" width="1" height="19" fill="#282828"/><rect x="645" y="536" width="1" height="19" fill="#282828"/><rect x="649" y="537" width="2" height="16" fill="#A8A8A8"/><rect x="188" y="577" width="147" height="2" fill="#4A4A4A"/><rect x="649" y="577" width="205" height="2" fill="#4A4A4A"/><rect x="335" y="560" width="314" height="19" fill="#3B3B3B"/><rect x="335" y="560" width="1" height="19" fill="#505050"/><rect x="649" y="561" width="2" height="16" fill="#A8A8A8"/><line x1="521" y1="174" x2="521" y2="587" stroke="#C8C8C8" stroke-width="2" stroke-dasharray="3,2" style="mix-blend-mode:multiply"/></svg>
<div style="position:absolute;left:854px;top:198px;width:2px;height:384px;background:#D4D4D4"></div>
<div class="t" style="left:190px;top:181px;">0</div>
<div class="t" style="left:651px;top:181px;">0</div>
<div style="position:absolute;left:3px;top:589px;width:28px;height:18px;background:#E1E1E1;border:1px solid #ADADAD"></div>
<div class="t" style="left:7px;top:593px;font-weight:bold;font-size:10.5px;-webkit-text-stroke:0.6px #000">X</div>
<div style="position:absolute;left:18px;top:591px;width:1px;height:14px;background:#9A9A9A"></div>
<div class="tri" style="left:21px;top:597px;border-width:4px 3.5px 0 3.5px"></div>
<div class="t" style="left:116.1px;top:593px;width:120px;text-align:center;letter-spacing:-0.3px">-70 ms</div>
<div class="t" style="left:183.0px;top:593px;width:120px;text-align:center;letter-spacing:-0.3px">0 ms</div>
<div class="t" style="left:249.9px;top:593px;width:120px;text-align:center;letter-spacing:-0.3px">70 ms</div>
<div class="t" style="left:316.8px;top:593px;width:120px;text-align:center;letter-spacing:-0.3px">140 ms</div>
<div class="t" style="left:383.7px;top:593px;width:120px;text-align:center;letter-spacing:-0.3px">210 ms</div>
<div class="t" style="left:450.6px;top:593px;width:120px;text-align:center;letter-spacing:-0.3px">280 ms</div>
<div class="t" style="left:517.5px;top:593px;width:120px;text-align:center;letter-spacing:-0.3px">350 ms</div>
<div class="t" style="left:584.4px;top:593px;width:120px;text-align:center;letter-spacing:-0.3px">420 ms</div>
<div class="t" style="left:651.3px;top:593px;width:120px;text-align:center;letter-spacing:-0.3px">490 ms</div>
<div class="t" style="left:718.2px;top:593px;width:120px;text-align:center;letter-spacing:-0.3px">560 ms</div>
<div class="t" style="left:785.1px;top:593px;width:120px;text-align:center;letter-spacing:-0.3px">630 ms</div>
<svg style="position:absolute;left:245px;top:594px" width="14" height="14" viewBox="0 0 14 14"><path d="M7 0.5 L13.5 13.5 L0.5 13.5Z" fill="#000"/></svg>
</body></html>
